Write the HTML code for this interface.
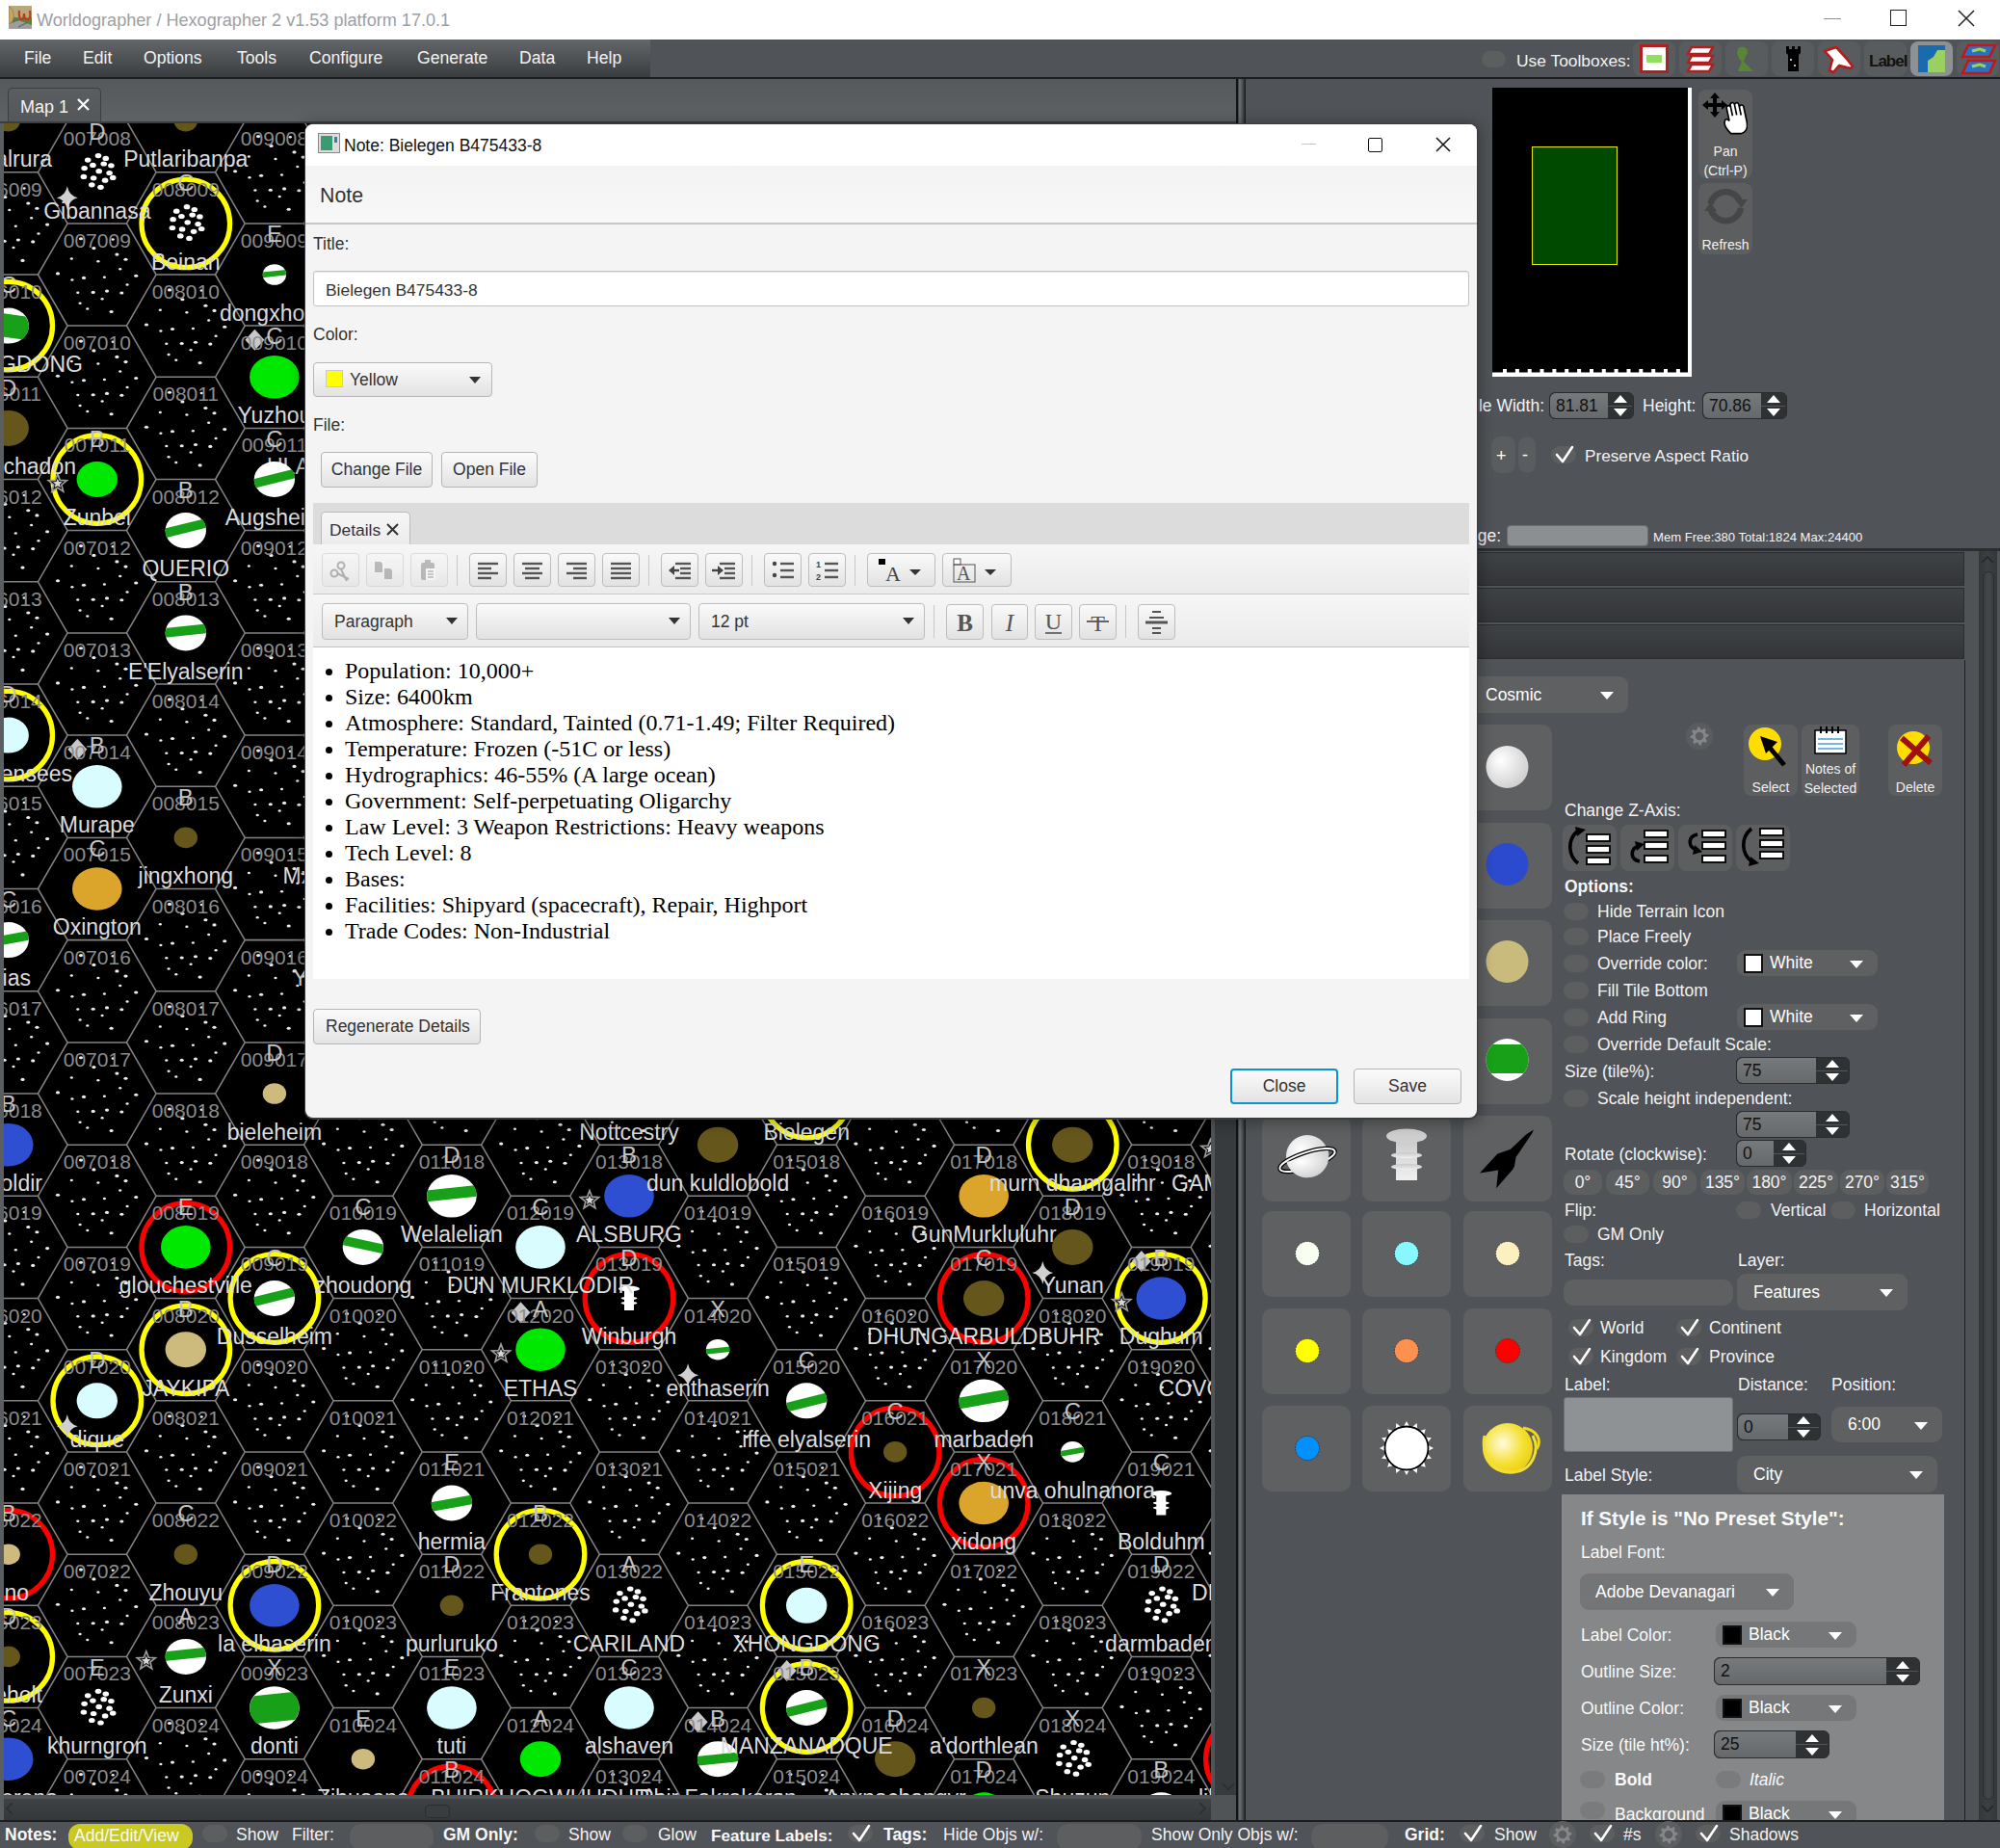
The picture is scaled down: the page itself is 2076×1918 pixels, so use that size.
<!DOCTYPE html>
<html><head><meta charset="utf-8">
<style>
*{box-sizing:border-box;margin:0;padding:0}
html,body{width:2076px;height:1918px;overflow:hidden;background:#505357;font-family:"Liberation Sans",sans-serif}
.a{position:absolute}
.t{position:absolute;white-space:nowrap;line-height:1}
</style></head><body>
<svg width="1257" height="1863" style="position:absolute;left:0;top:0">
<defs><clipPath id="mc"><rect x="4" y="128" width="1253" height="1735"/></clipPath>
<g id="st" fill="#ececec"><ellipse cx="-16.8" cy="-37.2" rx="2.1" ry="1.55"/><ellipse cx="-3.4" cy="-27.4" rx="2.1" ry="1.55"/><ellipse cx="20.6" cy="-20.9" rx="2.1" ry="1.55"/><ellipse cx="29.7" cy="-15.7" rx="2.1" ry="1.55"/><ellipse cx="-26.5" cy="-16.4" rx="1.6" ry="1.25"/><ellipse cx="1.1" cy="-13.8" rx="1.6" ry="1.25"/><ellipse cx="23.9" cy="-5.7" rx="1.6" ry="1.25"/><ellipse cx="-40.8" cy="-1.1" rx="2.1" ry="1.55"/><ellipse cx="40.4" cy="1.2" rx="2.1" ry="1.55"/><ellipse cx="-13.8" cy="3.4" rx="2.1" ry="1.55"/><ellipse cx="7.6" cy="2.8" rx="1.6" ry="1.25"/><ellipse cx="-25.9" cy="5.4" rx="1.6" ry="1.25"/><ellipse cx="31.3" cy="10.6" rx="1.6" ry="1.25"/><ellipse cx="-20" cy="18.7" rx="1.6" ry="1.25"/><ellipse cx="-4.1" cy="18.4" rx="2.1" ry="1.55"/><ellipse cx="10.2" cy="17.1" rx="2.1" ry="1.55"/><ellipse cx="25.5" cy="19" rx="2.1" ry="1.55"/><ellipse cx="5.3" cy="25.2" rx="1.6" ry="1.25"/><ellipse cx="-17.7" cy="29.8" rx="1.6" ry="1.25"/><ellipse cx="-10" cy="35.6" rx="1.6" ry="1.25"/><ellipse cx="14.8" cy="38.5" rx="2.1" ry="1.55"/><ellipse cx="16.4" cy="-36.5" rx="1.6" ry="1.25"/></g>
<g id="ast" fill="#fff"><ellipse cx="1.2" cy="-17.2" rx="3.3" ry="2.6"/><ellipse cx="9" cy="-14.4" rx="3.3" ry="2.6"/><ellipse cx="-9.6" cy="-12.7" rx="3.3" ry="2.6"/><ellipse cx="-4.4" cy="-7.4" rx="3.3" ry="2.6"/><ellipse cx="6.9" cy="-8.8" rx="3.3" ry="2.6"/><ellipse cx="14.6" cy="-7" rx="3.3" ry="2.6"/><ellipse cx="-13.2" cy="-4.2" rx="3.3" ry="2.6"/><ellipse cx="1.9" cy="-1.1" rx="3.3" ry="2.6"/><ellipse cx="12.8" cy="0.7" rx="3.3" ry="2.6"/><ellipse cx="-13.9" cy="4.6" rx="3.3" ry="2.6"/><ellipse cx="-3.7" cy="6" rx="3.3" ry="2.6"/><ellipse cx="16.4" cy="5.6" rx="3.3" ry="2.6"/><ellipse cx="8.3" cy="8.4" rx="3.3" ry="2.6"/><ellipse cx="-5.5" cy="13" rx="3.3" ry="2.6"/><ellipse cx="3.7" cy="15.5" rx="3.3" ry="2.6"/></g>
<g id="tw" fill="#fff"><ellipse cx="0" cy="-10" rx="11" ry="3"/><rect x="-5" y="-11" width="10" height="23.5"/><ellipse cx="0" cy="0" rx="8.5" ry="1.6"/><ellipse cx="0" cy="5" rx="8.5" ry="1.6"/></g>
<path id="f4" d="M0,-12 Q2,-2 11,0 Q2,2 0,12 Q-2,2 -11,0 Q-2,-2 0,-12Z" fill="#d0d0d0"/>
<g id="so"><polygon points="0,-10 2.5,-3.5 9.5,-3.1 4.1,1.3 5.9,8.1 0,4.3 -5.9,8.1 -4.1,1.3 -9.5,-3.1 -2.5,-3.5" fill="#000" stroke="#9c9c9c" stroke-width="1.7"/><polygon points="0,-5.2 1.4,-1.9 4.9,-1.6 2.2,0.7 3.1,4.2 0,2.3 -3.1,4.2 -2.2,0.7 -4.9,-1.6 -1.4,-1.9" fill="#d6d6d6"/></g>
<path id="dm" d="M0,-11 L10,0 L0,11 L-10,0Z" fill="#c8c8c8"/>
</defs>
<g clip-path="url(#mc)">
<rect x="0" y="0" width="1257" height="1863" fill="#000"/>
<g><use href="#st" x="8.7" y="231.9"/><use href="#st" x="8.7" y="550.6"/><use href="#st" x="8.7" y="656.9"/><use href="#st" x="8.7" y="869.4"/><use href="#st" x="8.7" y="1081.9"/><use href="#st" x="8.7" y="1294.4"/><use href="#st" x="8.7" y="1400.7"/><use href="#st" x="8.7" y="1506.9"/><use href="#st" x="8.7" y="1931.9"/><use href="#st" x="100.8" y="72.5"/><use href="#st" x="100.8" y="285"/><use href="#st" x="100.8" y="391.3"/><use href="#st" x="100.8" y="603.8"/><use href="#st" x="100.8" y="710"/><use href="#st" x="100.8" y="1028.8"/><use href="#st" x="100.8" y="1135"/><use href="#st" x="100.8" y="1241.3"/><use href="#st" x="100.8" y="1347.5"/><use href="#st" x="100.8" y="1560"/><use href="#st" x="100.8" y="1666.3"/><use href="#st" x="100.8" y="1878.8"/><use href="#st" x="192.8" y="338.1"/><use href="#st" x="192.8" y="444.4"/><use href="#st" x="192.8" y="763.1"/><use href="#st" x="192.8" y="975.6"/><use href="#st" x="192.8" y="1081.9"/><use href="#st" x="192.8" y="1188.2"/><use href="#st" x="192.8" y="1506.9"/><use href="#st" x="192.8" y="1825.7"/><use href="#st" x="192.8" y="1931.9"/><use href="#st" x="284.9" y="72.5"/><use href="#st" x="284.9" y="178.8"/><use href="#st" x="284.9" y="603.8"/><use href="#st" x="284.9" y="710"/><use href="#st" x="284.9" y="816.3"/><use href="#st" x="284.9" y="922.5"/><use href="#st" x="284.9" y="1028.8"/><use href="#st" x="284.9" y="1241.3"/><use href="#st" x="284.9" y="1453.8"/><use href="#st" x="284.9" y="1560"/><use href="#st" x="284.9" y="1878.8"/><use href="#st" x="376.9" y="125.7"/><use href="#st" x="376.9" y="231.9"/><use href="#st" x="376.9" y="338.1"/><use href="#st" x="376.9" y="444.4"/><use href="#st" x="376.9" y="550.6"/><use href="#st" x="376.9" y="656.9"/><use href="#st" x="376.9" y="763.1"/><use href="#st" x="376.9" y="869.4"/><use href="#st" x="376.9" y="975.6"/><use href="#st" x="376.9" y="1081.9"/><use href="#st" x="376.9" y="1188.2"/><use href="#st" x="376.9" y="1400.7"/><use href="#st" x="376.9" y="1506.9"/><use href="#st" x="376.9" y="1613.2"/><use href="#st" x="376.9" y="1719.4"/><use href="#st" x="376.9" y="1931.9"/><use href="#st" x="468.9" y="72.5"/><use href="#st" x="468.9" y="178.8"/><use href="#st" x="468.9" y="285"/><use href="#st" x="468.9" y="391.3"/><use href="#st" x="468.9" y="497.5"/><use href="#st" x="468.9" y="603.8"/><use href="#st" x="468.9" y="710"/><use href="#st" x="468.9" y="816.3"/><use href="#st" x="468.9" y="922.5"/><use href="#st" x="468.9" y="1028.8"/><use href="#st" x="468.9" y="1135"/><use href="#st" x="468.9" y="1347.5"/><use href="#st" x="468.9" y="1453.8"/><use href="#st" x="561" y="125.7"/><use href="#st" x="561" y="231.9"/><use href="#st" x="561" y="338.1"/><use href="#st" x="561" y="444.4"/><use href="#st" x="561" y="550.6"/><use href="#st" x="561" y="656.9"/><use href="#st" x="561" y="763.1"/><use href="#st" x="561" y="869.4"/><use href="#st" x="561" y="975.6"/><use href="#st" x="561" y="1081.9"/><use href="#st" x="561" y="1188.2"/><use href="#st" x="561" y="1506.9"/><use href="#st" x="561" y="1719.4"/><use href="#st" x="561" y="1931.9"/><use href="#st" x="653" y="72.5"/><use href="#st" x="653" y="178.8"/><use href="#st" x="653" y="285"/><use href="#st" x="653" y="391.3"/><use href="#st" x="653" y="497.5"/><use href="#st" x="653" y="603.8"/><use href="#st" x="653" y="710"/><use href="#st" x="653" y="816.3"/><use href="#st" x="653" y="922.5"/><use href="#st" x="653" y="1028.8"/><use href="#st" x="653" y="1135"/><use href="#st" x="653" y="1453.8"/><use href="#st" x="653" y="1560"/><use href="#st" x="653" y="1878.8"/><use href="#st" x="745.1" y="125.7"/><use href="#st" x="745.1" y="231.9"/><use href="#st" x="745.1" y="338.1"/><use href="#st" x="745.1" y="444.4"/><use href="#st" x="745.1" y="550.6"/><use href="#st" x="745.1" y="656.9"/><use href="#st" x="745.1" y="763.1"/><use href="#st" x="745.1" y="869.4"/><use href="#st" x="745.1" y="975.6"/><use href="#st" x="745.1" y="1081.9"/><use href="#st" x="745.1" y="1294.4"/><use href="#st" x="745.1" y="1506.9"/><use href="#st" x="745.1" y="1613.2"/><use href="#st" x="745.1" y="1719.4"/><use href="#st" x="745.1" y="1931.9"/><use href="#st" x="837.2" y="72.5"/><use href="#st" x="837.2" y="178.8"/><use href="#st" x="837.2" y="285"/><use href="#st" x="837.2" y="391.3"/><use href="#st" x="837.2" y="497.5"/><use href="#st" x="837.2" y="603.8"/><use href="#st" x="837.2" y="710"/><use href="#st" x="837.2" y="816.3"/><use href="#st" x="837.2" y="922.5"/><use href="#st" x="837.2" y="1028.8"/><use href="#st" x="837.2" y="1241.3"/><use href="#st" x="837.2" y="1347.5"/><use href="#st" x="837.2" y="1560"/><use href="#st" x="837.2" y="1878.8"/><use href="#st" x="929.2" y="125.7"/><use href="#st" x="929.2" y="231.9"/><use href="#st" x="929.2" y="338.1"/><use href="#st" x="929.2" y="444.4"/><use href="#st" x="929.2" y="550.6"/><use href="#st" x="929.2" y="656.9"/><use href="#st" x="929.2" y="763.1"/><use href="#st" x="929.2" y="869.4"/><use href="#st" x="929.2" y="975.6"/><use href="#st" x="929.2" y="1081.9"/><use href="#st" x="929.2" y="1188.2"/><use href="#st" x="929.2" y="1294.4"/><use href="#st" x="929.2" y="1400.7"/><use href="#st" x="929.2" y="1613.2"/><use href="#st" x="929.2" y="1719.4"/><use href="#st" x="929.2" y="1931.9"/><use href="#st" x="1021.2" y="72.5"/><use href="#st" x="1021.2" y="178.8"/><use href="#st" x="1021.2" y="285"/><use href="#st" x="1021.2" y="391.3"/><use href="#st" x="1021.2" y="497.5"/><use href="#st" x="1021.2" y="603.8"/><use href="#st" x="1021.2" y="710"/><use href="#st" x="1021.2" y="816.3"/><use href="#st" x="1021.2" y="922.5"/><use href="#st" x="1021.2" y="1028.8"/><use href="#st" x="1021.2" y="1135"/><use href="#st" x="1021.2" y="1666.3"/><use href="#st" x="1113.3" y="125.7"/><use href="#st" x="1113.3" y="231.9"/><use href="#st" x="1113.3" y="338.1"/><use href="#st" x="1113.3" y="444.4"/><use href="#st" x="1113.3" y="550.6"/><use href="#st" x="1113.3" y="656.9"/><use href="#st" x="1113.3" y="763.1"/><use href="#st" x="1113.3" y="869.4"/><use href="#st" x="1113.3" y="975.6"/><use href="#st" x="1113.3" y="1081.9"/><use href="#st" x="1113.3" y="1400.7"/><use href="#st" x="1113.3" y="1613.2"/><use href="#st" x="1113.3" y="1719.4"/><use href="#st" x="1113.3" y="1931.9"/><use href="#st" x="1205.3" y="72.5"/><use href="#st" x="1205.3" y="178.8"/><use href="#st" x="1205.3" y="285"/><use href="#st" x="1205.3" y="391.3"/><use href="#st" x="1205.3" y="497.5"/><use href="#st" x="1205.3" y="603.8"/><use href="#st" x="1205.3" y="710"/><use href="#st" x="1205.3" y="816.3"/><use href="#st" x="1205.3" y="922.5"/><use href="#st" x="1205.3" y="1028.8"/><use href="#st" x="1205.3" y="1135"/><use href="#st" x="1205.3" y="1241.3"/><use href="#st" x="1205.3" y="1453.8"/><use href="#st" x="1205.3" y="1772.5"/><use href="#st" x="1297.4" y="125.7"/><use href="#st" x="1297.4" y="231.9"/><use href="#st" x="1297.4" y="338.1"/><use href="#st" x="1297.4" y="444.4"/><use href="#st" x="1297.4" y="550.6"/><use href="#st" x="1297.4" y="656.9"/><use href="#st" x="1297.4" y="763.1"/><use href="#st" x="1297.4" y="869.4"/><use href="#st" x="1297.4" y="975.6"/><use href="#st" x="1297.4" y="1081.9"/><use href="#st" x="1297.4" y="1188.2"/><use href="#st" x="1297.4" y="1294.4"/><use href="#st" x="1297.4" y="1400.7"/><use href="#st" x="1297.4" y="1506.9"/><use href="#st" x="1297.4" y="1613.2"/><use href="#st" x="1297.4" y="1719.4"/><use href="#st" x="1297.4" y="1931.9"/></g>
<path d="M-52.6,125.7L-22,72.5L39.4,72.5L70.1,125.7L39.4,178.8L-22,178.8ZM-52.6,231.9L-22,178.8L39.4,178.8L70.1,231.9L39.4,285L-22,285ZM-52.6,338.1L-22,285L39.4,285L70.1,338.1L39.4,391.3L-22,391.3ZM-52.6,444.4L-22,391.3L39.4,391.3L70.1,444.4L39.4,497.5L-22,497.5ZM-52.6,550.6L-22,497.5L39.4,497.5L70.1,550.6L39.4,603.8L-22,603.8ZM-52.6,656.9L-22,603.8L39.4,603.8L70.1,656.9L39.4,710L-22,710ZM-52.6,763.1L-22,710L39.4,710L70.1,763.1L39.4,816.3L-22,816.3ZM-52.6,869.4L-22,816.3L39.4,816.3L70.1,869.4L39.4,922.5L-22,922.5ZM-52.6,975.6L-22,922.5L39.4,922.5L70.1,975.6L39.4,1028.8L-22,1028.8ZM-52.6,1081.9L-22,1028.8L39.4,1028.8L70.1,1081.9L39.4,1135L-22,1135ZM-52.6,1188.2L-22,1135L39.4,1135L70.1,1188.2L39.4,1241.3L-22,1241.3ZM-52.6,1294.4L-22,1241.3L39.4,1241.3L70.1,1294.4L39.4,1347.5L-22,1347.5ZM-52.6,1400.7L-22,1347.5L39.4,1347.5L70.1,1400.7L39.4,1453.8L-22,1453.8ZM-52.6,1506.9L-22,1453.8L39.4,1453.8L70.1,1506.9L39.4,1560L-22,1560ZM-52.6,1613.2L-22,1560L39.4,1560L70.1,1613.2L39.4,1666.3L-22,1666.3ZM-52.6,1719.4L-22,1666.3L39.4,1666.3L70.1,1719.4L39.4,1772.5L-22,1772.5ZM-52.6,1825.7L-22,1772.5L39.4,1772.5L70.1,1825.7L39.4,1878.8L-22,1878.8ZM-52.6,1931.9L-22,1878.8L39.4,1878.8L70.1,1931.9L39.4,1985L-22,1985ZM39.4,72.5L70.1,19.4L131.4,19.4L162.1,72.5L131.4,125.7L70.1,125.7ZM39.4,178.8L70.1,125.7L131.4,125.7L162.1,178.8L131.4,231.9L70.1,231.9ZM39.4,285L70.1,231.9L131.4,231.9L162.1,285L131.4,338.1L70.1,338.1ZM39.4,391.3L70.1,338.1L131.4,338.1L162.1,391.3L131.4,444.4L70.1,444.4ZM39.4,497.5L70.1,444.4L131.4,444.4L162.1,497.5L131.4,550.6L70.1,550.6ZM39.4,603.8L70.1,550.6L131.4,550.6L162.1,603.8L131.4,656.9L70.1,656.9ZM39.4,710L70.1,656.9L131.4,656.9L162.1,710L131.4,763.1L70.1,763.1ZM39.4,816.3L70.1,763.1L131.4,763.1L162.1,816.3L131.4,869.4L70.1,869.4ZM39.4,922.5L70.1,869.4L131.4,869.4L162.1,922.5L131.4,975.6L70.1,975.6ZM39.4,1028.8L70.1,975.7L131.4,975.7L162.1,1028.8L131.4,1081.9L70.1,1081.9ZM39.4,1135L70.1,1081.9L131.4,1081.9L162.1,1135L131.4,1188.2L70.1,1188.2ZM39.4,1241.3L70.1,1188.2L131.4,1188.2L162.1,1241.3L131.4,1294.4L70.1,1294.4ZM39.4,1347.5L70.1,1294.4L131.4,1294.4L162.1,1347.5L131.4,1400.7L70.1,1400.7ZM39.4,1453.8L70.1,1400.7L131.4,1400.7L162.1,1453.8L131.4,1506.9L70.1,1506.9ZM39.4,1560L70.1,1506.9L131.4,1506.9L162.1,1560L131.4,1613.2L70.1,1613.2ZM39.4,1666.3L70.1,1613.2L131.4,1613.2L162.1,1666.3L131.4,1719.4L70.1,1719.4ZM39.4,1772.5L70.1,1719.4L131.4,1719.4L162.1,1772.5L131.4,1825.7L70.1,1825.7ZM39.4,1878.8L70.1,1825.7L131.4,1825.7L162.1,1878.8L131.4,1931.9L70.1,1931.9ZM131.5,125.7L162.1,72.5L223.5,72.5L254.2,125.7L223.5,178.8L162.1,178.8ZM131.5,231.9L162.1,178.8L223.5,178.8L254.2,231.9L223.5,285L162.1,285ZM131.5,338.1L162.1,285L223.5,285L254.2,338.1L223.5,391.3L162.1,391.3ZM131.5,444.4L162.1,391.3L223.5,391.3L254.2,444.4L223.5,497.5L162.1,497.5ZM131.5,550.6L162.1,497.5L223.5,497.5L254.2,550.6L223.5,603.8L162.1,603.8ZM131.5,656.9L162.1,603.8L223.5,603.8L254.2,656.9L223.5,710L162.1,710ZM131.5,763.1L162.1,710L223.5,710L254.2,763.1L223.5,816.3L162.1,816.3ZM131.5,869.4L162.1,816.3L223.5,816.3L254.2,869.4L223.5,922.5L162.1,922.5ZM131.5,975.6L162.1,922.5L223.5,922.5L254.2,975.6L223.5,1028.8L162.1,1028.8ZM131.5,1081.9L162.1,1028.8L223.5,1028.8L254.2,1081.9L223.5,1135L162.1,1135ZM131.5,1188.2L162.1,1135L223.5,1135L254.2,1188.2L223.5,1241.3L162.1,1241.3ZM131.5,1294.4L162.1,1241.3L223.5,1241.3L254.2,1294.4L223.5,1347.5L162.1,1347.5ZM131.5,1400.7L162.1,1347.5L223.5,1347.5L254.2,1400.7L223.5,1453.8L162.1,1453.8ZM131.5,1506.9L162.1,1453.8L223.5,1453.8L254.2,1506.9L223.5,1560L162.1,1560ZM131.5,1613.2L162.1,1560L223.5,1560L254.2,1613.2L223.5,1666.3L162.1,1666.3ZM131.5,1719.4L162.1,1666.3L223.5,1666.3L254.2,1719.4L223.5,1772.5L162.1,1772.5ZM131.5,1825.7L162.1,1772.5L223.5,1772.5L254.2,1825.7L223.5,1878.8L162.1,1878.8ZM131.5,1931.9L162.1,1878.8L223.5,1878.8L254.2,1931.9L223.5,1985L162.1,1985ZM223.5,72.5L254.2,19.4L315.5,19.4L346.2,72.5L315.5,125.7L254.2,125.7ZM223.5,178.8L254.2,125.7L315.5,125.7L346.2,178.8L315.5,231.9L254.2,231.9ZM223.5,285L254.2,231.9L315.5,231.9L346.2,285L315.5,338.1L254.2,338.1ZM223.5,391.3L254.2,338.1L315.5,338.1L346.2,391.3L315.5,444.4L254.2,444.4ZM223.5,497.5L254.2,444.4L315.5,444.4L346.2,497.5L315.5,550.6L254.2,550.6ZM223.5,603.8L254.2,550.6L315.5,550.6L346.2,603.8L315.5,656.9L254.2,656.9ZM223.5,710L254.2,656.9L315.5,656.9L346.2,710L315.5,763.1L254.2,763.1ZM223.5,816.3L254.2,763.1L315.5,763.1L346.2,816.3L315.5,869.4L254.2,869.4ZM223.5,922.5L254.2,869.4L315.5,869.4L346.2,922.5L315.5,975.6L254.2,975.6ZM223.5,1028.8L254.2,975.7L315.5,975.7L346.2,1028.8L315.5,1081.9L254.2,1081.9ZM223.5,1135L254.2,1081.9L315.5,1081.9L346.2,1135L315.5,1188.2L254.2,1188.2ZM223.5,1241.3L254.2,1188.2L315.5,1188.2L346.2,1241.3L315.5,1294.4L254.2,1294.4ZM223.5,1347.5L254.2,1294.4L315.5,1294.4L346.2,1347.5L315.5,1400.7L254.2,1400.7ZM223.5,1453.8L254.2,1400.7L315.5,1400.7L346.2,1453.8L315.5,1506.9L254.2,1506.9ZM223.5,1560L254.2,1506.9L315.5,1506.9L346.2,1560L315.5,1613.2L254.2,1613.2ZM223.5,1666.3L254.2,1613.2L315.5,1613.2L346.2,1666.3L315.5,1719.4L254.2,1719.4ZM223.5,1772.5L254.2,1719.4L315.5,1719.4L346.2,1772.5L315.5,1825.7L254.2,1825.7ZM223.5,1878.8L254.2,1825.7L315.5,1825.7L346.2,1878.8L315.5,1931.9L254.2,1931.9ZM315.5,125.7L346.2,72.5L407.6,72.5L438.2,125.7L407.6,178.8L346.2,178.8ZM315.5,231.9L346.2,178.8L407.6,178.8L438.2,231.9L407.6,285L346.2,285ZM315.5,338.1L346.2,285L407.6,285L438.2,338.1L407.6,391.3L346.2,391.3ZM315.5,444.4L346.2,391.3L407.6,391.3L438.2,444.4L407.6,497.5L346.2,497.5ZM315.5,550.6L346.2,497.5L407.6,497.5L438.2,550.6L407.6,603.8L346.2,603.8ZM315.5,656.9L346.2,603.8L407.6,603.8L438.2,656.9L407.6,710L346.2,710ZM315.5,763.1L346.2,710L407.6,710L438.2,763.1L407.6,816.3L346.2,816.3ZM315.5,869.4L346.2,816.3L407.6,816.3L438.2,869.4L407.6,922.5L346.2,922.5ZM315.5,975.6L346.2,922.5L407.6,922.5L438.2,975.6L407.6,1028.8L346.2,1028.8ZM315.5,1081.9L346.2,1028.8L407.6,1028.8L438.2,1081.9L407.6,1135L346.2,1135ZM315.5,1188.2L346.2,1135L407.6,1135L438.2,1188.2L407.6,1241.3L346.2,1241.3ZM315.5,1294.4L346.2,1241.3L407.6,1241.3L438.2,1294.4L407.6,1347.5L346.2,1347.5ZM315.5,1400.7L346.2,1347.5L407.6,1347.5L438.2,1400.7L407.6,1453.8L346.2,1453.8ZM315.5,1506.9L346.2,1453.8L407.6,1453.8L438.2,1506.9L407.6,1560L346.2,1560ZM315.5,1613.2L346.2,1560L407.6,1560L438.2,1613.2L407.6,1666.3L346.2,1666.3ZM315.5,1719.4L346.2,1666.3L407.6,1666.3L438.2,1719.4L407.6,1772.5L346.2,1772.5ZM315.5,1825.7L346.2,1772.5L407.6,1772.5L438.2,1825.7L407.6,1878.8L346.2,1878.8ZM315.5,1931.9L346.2,1878.8L407.6,1878.8L438.2,1931.9L407.6,1985L346.2,1985ZM407.6,72.5L438.3,19.4L499.6,19.4L530.3,72.5L499.6,125.7L438.3,125.7ZM407.6,178.8L438.3,125.7L499.6,125.7L530.3,178.8L499.6,231.9L438.3,231.9ZM407.6,285L438.3,231.9L499.6,231.9L530.3,285L499.6,338.1L438.3,338.1ZM407.6,391.3L438.3,338.1L499.6,338.1L530.3,391.3L499.6,444.4L438.3,444.4ZM407.6,497.5L438.3,444.4L499.6,444.4L530.3,497.5L499.6,550.6L438.3,550.6ZM407.6,603.8L438.3,550.6L499.6,550.6L530.3,603.8L499.6,656.9L438.3,656.9ZM407.6,710L438.3,656.9L499.6,656.9L530.3,710L499.6,763.1L438.3,763.1ZM407.6,816.3L438.3,763.1L499.6,763.1L530.3,816.3L499.6,869.4L438.3,869.4ZM407.6,922.5L438.3,869.4L499.6,869.4L530.3,922.5L499.6,975.6L438.3,975.6ZM407.6,1028.8L438.3,975.7L499.6,975.7L530.3,1028.8L499.6,1081.9L438.3,1081.9ZM407.6,1135L438.3,1081.9L499.6,1081.9L530.3,1135L499.6,1188.2L438.3,1188.2ZM407.6,1241.3L438.3,1188.2L499.6,1188.2L530.3,1241.3L499.6,1294.4L438.3,1294.4ZM407.6,1347.5L438.3,1294.4L499.6,1294.4L530.3,1347.5L499.6,1400.7L438.3,1400.7ZM407.6,1453.8L438.3,1400.7L499.6,1400.7L530.3,1453.8L499.6,1506.9L438.3,1506.9ZM407.6,1560L438.3,1506.9L499.6,1506.9L530.3,1560L499.6,1613.2L438.3,1613.2ZM407.6,1666.3L438.3,1613.2L499.6,1613.2L530.3,1666.3L499.6,1719.4L438.3,1719.4ZM407.6,1772.5L438.3,1719.4L499.6,1719.4L530.3,1772.5L499.6,1825.7L438.3,1825.7ZM407.6,1878.8L438.3,1825.7L499.6,1825.7L530.3,1878.8L499.6,1931.9L438.3,1931.9ZM499.6,125.7L530.3,72.5L591.7,72.5L622.4,125.7L591.7,178.8L530.3,178.8ZM499.6,231.9L530.3,178.8L591.7,178.8L622.4,231.9L591.7,285L530.3,285ZM499.6,338.1L530.3,285L591.7,285L622.4,338.1L591.7,391.3L530.3,391.3ZM499.6,444.4L530.3,391.3L591.7,391.3L622.4,444.4L591.7,497.5L530.3,497.5ZM499.6,550.6L530.3,497.5L591.7,497.5L622.4,550.6L591.7,603.8L530.3,603.8ZM499.6,656.9L530.3,603.8L591.7,603.8L622.4,656.9L591.7,710L530.3,710ZM499.6,763.1L530.3,710L591.7,710L622.4,763.1L591.7,816.3L530.3,816.3ZM499.6,869.4L530.3,816.3L591.7,816.3L622.4,869.4L591.7,922.5L530.3,922.5ZM499.6,975.6L530.3,922.5L591.7,922.5L622.4,975.6L591.7,1028.8L530.3,1028.8ZM499.6,1081.9L530.3,1028.8L591.7,1028.8L622.4,1081.9L591.7,1135L530.3,1135ZM499.6,1188.2L530.3,1135L591.7,1135L622.4,1188.2L591.7,1241.3L530.3,1241.3ZM499.6,1294.4L530.3,1241.3L591.7,1241.3L622.4,1294.4L591.7,1347.5L530.3,1347.5ZM499.6,1400.7L530.3,1347.5L591.7,1347.5L622.4,1400.7L591.7,1453.8L530.3,1453.8ZM499.6,1506.9L530.3,1453.8L591.7,1453.8L622.4,1506.9L591.7,1560L530.3,1560ZM499.6,1613.2L530.3,1560L591.7,1560L622.4,1613.2L591.7,1666.3L530.3,1666.3ZM499.6,1719.4L530.3,1666.3L591.7,1666.3L622.4,1719.4L591.7,1772.5L530.3,1772.5ZM499.6,1825.7L530.3,1772.5L591.7,1772.5L622.4,1825.7L591.7,1878.8L530.3,1878.8ZM499.6,1931.9L530.3,1878.8L591.7,1878.8L622.4,1931.9L591.7,1985L530.3,1985ZM591.7,72.5L622.4,19.4L683.7,19.4L714.4,72.5L683.7,125.7L622.4,125.7ZM591.7,178.8L622.4,125.7L683.7,125.7L714.4,178.8L683.7,231.9L622.4,231.9ZM591.7,285L622.4,231.9L683.7,231.9L714.4,285L683.7,338.1L622.4,338.1ZM591.7,391.3L622.4,338.1L683.7,338.1L714.4,391.3L683.7,444.4L622.4,444.4ZM591.7,497.5L622.4,444.4L683.7,444.4L714.4,497.5L683.7,550.6L622.4,550.6ZM591.7,603.8L622.4,550.6L683.7,550.6L714.4,603.8L683.7,656.9L622.4,656.9ZM591.7,710L622.4,656.9L683.7,656.9L714.4,710L683.7,763.1L622.4,763.1ZM591.7,816.3L622.4,763.1L683.7,763.1L714.4,816.3L683.7,869.4L622.4,869.4ZM591.7,922.5L622.4,869.4L683.7,869.4L714.4,922.5L683.7,975.6L622.4,975.6ZM591.7,1028.8L622.4,975.7L683.7,975.7L714.4,1028.8L683.7,1081.9L622.4,1081.9ZM591.7,1135L622.4,1081.9L683.7,1081.9L714.4,1135L683.7,1188.2L622.4,1188.2ZM591.7,1241.3L622.4,1188.2L683.7,1188.2L714.4,1241.3L683.7,1294.4L622.4,1294.4ZM591.7,1347.5L622.4,1294.4L683.7,1294.4L714.4,1347.5L683.7,1400.7L622.4,1400.7ZM591.7,1453.8L622.4,1400.7L683.7,1400.7L714.4,1453.8L683.7,1506.9L622.4,1506.9ZM591.7,1560L622.4,1506.9L683.7,1506.9L714.4,1560L683.7,1613.2L622.4,1613.2ZM591.7,1666.3L622.4,1613.2L683.7,1613.2L714.4,1666.3L683.7,1719.4L622.4,1719.4ZM591.7,1772.5L622.4,1719.4L683.7,1719.4L714.4,1772.5L683.7,1825.7L622.4,1825.7ZM591.7,1878.8L622.4,1825.7L683.7,1825.7L714.4,1878.8L683.7,1931.9L622.4,1931.9ZM683.7,125.7L714.4,72.5L775.8,72.5L806.4,125.7L775.8,178.8L714.4,178.8ZM683.7,231.9L714.4,178.8L775.8,178.8L806.4,231.9L775.8,285L714.4,285ZM683.7,338.1L714.4,285L775.8,285L806.4,338.1L775.8,391.3L714.4,391.3ZM683.7,444.4L714.4,391.3L775.8,391.3L806.4,444.4L775.8,497.5L714.4,497.5ZM683.7,550.6L714.4,497.5L775.8,497.5L806.4,550.6L775.8,603.8L714.4,603.8ZM683.7,656.9L714.4,603.8L775.8,603.8L806.4,656.9L775.8,710L714.4,710ZM683.7,763.1L714.4,710L775.8,710L806.4,763.1L775.8,816.3L714.4,816.3ZM683.7,869.4L714.4,816.3L775.8,816.3L806.4,869.4L775.8,922.5L714.4,922.5ZM683.7,975.6L714.4,922.5L775.8,922.5L806.4,975.6L775.8,1028.8L714.4,1028.8ZM683.7,1081.9L714.4,1028.8L775.8,1028.8L806.4,1081.9L775.8,1135L714.4,1135ZM683.7,1188.2L714.4,1135L775.8,1135L806.4,1188.2L775.8,1241.3L714.4,1241.3ZM683.7,1294.4L714.4,1241.3L775.8,1241.3L806.4,1294.4L775.8,1347.5L714.4,1347.5ZM683.7,1400.7L714.4,1347.5L775.8,1347.5L806.4,1400.7L775.8,1453.8L714.4,1453.8ZM683.7,1506.9L714.4,1453.8L775.8,1453.8L806.4,1506.9L775.8,1560L714.4,1560ZM683.7,1613.2L714.4,1560L775.8,1560L806.4,1613.2L775.8,1666.3L714.4,1666.3ZM683.7,1719.4L714.4,1666.3L775.8,1666.3L806.4,1719.4L775.8,1772.5L714.4,1772.5ZM683.7,1825.7L714.4,1772.5L775.8,1772.5L806.4,1825.7L775.8,1878.8L714.4,1878.8ZM683.7,1931.9L714.4,1878.8L775.8,1878.8L806.4,1931.9L775.8,1985L714.4,1985ZM775.8,72.5L806.5,19.4L867.8,19.4L898.5,72.5L867.8,125.7L806.5,125.7ZM775.8,178.8L806.5,125.7L867.8,125.7L898.5,178.8L867.8,231.9L806.5,231.9ZM775.8,285L806.5,231.9L867.8,231.9L898.5,285L867.8,338.1L806.5,338.1ZM775.8,391.3L806.5,338.1L867.8,338.1L898.5,391.3L867.8,444.4L806.5,444.4ZM775.8,497.5L806.5,444.4L867.8,444.4L898.5,497.5L867.8,550.6L806.5,550.6ZM775.8,603.8L806.5,550.6L867.8,550.6L898.5,603.8L867.8,656.9L806.5,656.9ZM775.8,710L806.5,656.9L867.8,656.9L898.5,710L867.8,763.1L806.5,763.1ZM775.8,816.3L806.5,763.1L867.8,763.1L898.5,816.3L867.8,869.4L806.5,869.4ZM775.8,922.5L806.5,869.4L867.8,869.4L898.5,922.5L867.8,975.6L806.5,975.6ZM775.8,1028.8L806.5,975.7L867.8,975.7L898.5,1028.8L867.8,1081.9L806.5,1081.9ZM775.8,1135L806.5,1081.9L867.8,1081.9L898.5,1135L867.8,1188.2L806.5,1188.2ZM775.8,1241.3L806.5,1188.2L867.8,1188.2L898.5,1241.3L867.8,1294.4L806.5,1294.4ZM775.8,1347.5L806.5,1294.4L867.8,1294.4L898.5,1347.5L867.8,1400.7L806.5,1400.7ZM775.8,1453.8L806.5,1400.7L867.8,1400.7L898.5,1453.8L867.8,1506.9L806.5,1506.9ZM775.8,1560L806.5,1506.9L867.8,1506.9L898.5,1560L867.8,1613.2L806.5,1613.2ZM775.8,1666.3L806.5,1613.2L867.8,1613.2L898.5,1666.3L867.8,1719.4L806.5,1719.4ZM775.8,1772.5L806.5,1719.4L867.8,1719.4L898.5,1772.5L867.8,1825.7L806.5,1825.7ZM775.8,1878.8L806.5,1825.7L867.8,1825.7L898.5,1878.8L867.8,1931.9L806.5,1931.9ZM867.9,125.7L898.5,72.5L959.9,72.5L990.6,125.7L959.9,178.8L898.5,178.8ZM867.9,231.9L898.5,178.8L959.9,178.8L990.6,231.9L959.9,285L898.5,285ZM867.9,338.1L898.5,285L959.9,285L990.6,338.1L959.9,391.3L898.5,391.3ZM867.9,444.4L898.5,391.3L959.9,391.3L990.6,444.4L959.9,497.5L898.5,497.5ZM867.9,550.6L898.5,497.5L959.9,497.5L990.6,550.6L959.9,603.8L898.5,603.8ZM867.9,656.9L898.5,603.8L959.9,603.8L990.6,656.9L959.9,710L898.5,710ZM867.9,763.1L898.5,710L959.9,710L990.6,763.1L959.9,816.3L898.5,816.3ZM867.9,869.4L898.5,816.3L959.9,816.3L990.6,869.4L959.9,922.5L898.5,922.5ZM867.9,975.6L898.5,922.5L959.9,922.5L990.6,975.6L959.9,1028.8L898.5,1028.8ZM867.9,1081.9L898.5,1028.8L959.9,1028.8L990.6,1081.9L959.9,1135L898.5,1135ZM867.9,1188.2L898.5,1135L959.9,1135L990.6,1188.2L959.9,1241.3L898.5,1241.3ZM867.9,1294.4L898.5,1241.3L959.9,1241.3L990.6,1294.4L959.9,1347.5L898.5,1347.5ZM867.9,1400.7L898.5,1347.5L959.9,1347.5L990.6,1400.7L959.9,1453.8L898.5,1453.8ZM867.9,1506.9L898.5,1453.8L959.9,1453.8L990.6,1506.9L959.9,1560L898.5,1560ZM867.9,1613.2L898.5,1560L959.9,1560L990.6,1613.2L959.9,1666.3L898.5,1666.3ZM867.9,1719.4L898.5,1666.3L959.9,1666.3L990.6,1719.4L959.9,1772.5L898.5,1772.5ZM867.9,1825.7L898.5,1772.5L959.9,1772.5L990.6,1825.7L959.9,1878.8L898.5,1878.8ZM867.9,1931.9L898.5,1878.8L959.9,1878.8L990.6,1931.9L959.9,1985L898.5,1985ZM959.9,72.5L990.6,19.4L1051.9,19.4L1082.6,72.5L1051.9,125.7L990.6,125.7ZM959.9,178.8L990.6,125.7L1051.9,125.7L1082.6,178.8L1051.9,231.9L990.6,231.9ZM959.9,285L990.6,231.9L1051.9,231.9L1082.6,285L1051.9,338.1L990.6,338.1ZM959.9,391.3L990.6,338.1L1051.9,338.1L1082.6,391.3L1051.9,444.4L990.6,444.4ZM959.9,497.5L990.6,444.4L1051.9,444.4L1082.6,497.5L1051.9,550.6L990.6,550.6ZM959.9,603.8L990.6,550.6L1051.9,550.6L1082.6,603.8L1051.9,656.9L990.6,656.9ZM959.9,710L990.6,656.9L1051.9,656.9L1082.6,710L1051.9,763.1L990.6,763.1ZM959.9,816.3L990.6,763.1L1051.9,763.1L1082.6,816.3L1051.9,869.4L990.6,869.4ZM959.9,922.5L990.6,869.4L1051.9,869.4L1082.6,922.5L1051.9,975.6L990.6,975.6ZM959.9,1028.8L990.6,975.7L1051.9,975.7L1082.6,1028.8L1051.9,1081.9L990.6,1081.9ZM959.9,1135L990.6,1081.9L1051.9,1081.9L1082.6,1135L1051.9,1188.2L990.6,1188.2ZM959.9,1241.3L990.6,1188.2L1051.9,1188.2L1082.6,1241.3L1051.9,1294.4L990.6,1294.4ZM959.9,1347.5L990.6,1294.4L1051.9,1294.4L1082.6,1347.5L1051.9,1400.7L990.6,1400.7ZM959.9,1453.8L990.6,1400.7L1051.9,1400.7L1082.6,1453.8L1051.9,1506.9L990.6,1506.9ZM959.9,1560L990.6,1506.9L1051.9,1506.9L1082.6,1560L1051.9,1613.2L990.6,1613.2ZM959.9,1666.3L990.6,1613.2L1051.9,1613.2L1082.6,1666.3L1051.9,1719.4L990.6,1719.4ZM959.9,1772.5L990.6,1719.4L1051.9,1719.4L1082.6,1772.5L1051.9,1825.7L990.6,1825.7ZM959.9,1878.8L990.6,1825.7L1051.9,1825.7L1082.6,1878.8L1051.9,1931.9L990.6,1931.9ZM1052,125.7L1082.6,72.5L1144,72.5L1174.6,125.7L1144,178.8L1082.6,178.8ZM1052,231.9L1082.6,178.8L1144,178.8L1174.6,231.9L1144,285L1082.6,285ZM1052,338.1L1082.6,285L1144,285L1174.6,338.1L1144,391.3L1082.6,391.3ZM1052,444.4L1082.6,391.3L1144,391.3L1174.6,444.4L1144,497.5L1082.6,497.5ZM1052,550.6L1082.6,497.5L1144,497.5L1174.6,550.6L1144,603.8L1082.6,603.8ZM1052,656.9L1082.6,603.8L1144,603.8L1174.6,656.9L1144,710L1082.6,710ZM1052,763.1L1082.6,710L1144,710L1174.6,763.1L1144,816.3L1082.6,816.3ZM1052,869.4L1082.6,816.3L1144,816.3L1174.6,869.4L1144,922.5L1082.6,922.5ZM1052,975.6L1082.6,922.5L1144,922.5L1174.6,975.6L1144,1028.8L1082.6,1028.8ZM1052,1081.9L1082.6,1028.8L1144,1028.8L1174.6,1081.9L1144,1135L1082.6,1135ZM1052,1188.2L1082.6,1135L1144,1135L1174.6,1188.2L1144,1241.3L1082.6,1241.3ZM1052,1294.4L1082.6,1241.3L1144,1241.3L1174.6,1294.4L1144,1347.5L1082.6,1347.5ZM1052,1400.7L1082.6,1347.5L1144,1347.5L1174.6,1400.7L1144,1453.8L1082.6,1453.8ZM1052,1506.9L1082.6,1453.8L1144,1453.8L1174.6,1506.9L1144,1560L1082.6,1560ZM1052,1613.2L1082.6,1560L1144,1560L1174.6,1613.2L1144,1666.3L1082.6,1666.3ZM1052,1719.4L1082.6,1666.3L1144,1666.3L1174.6,1719.4L1144,1772.5L1082.6,1772.5ZM1052,1825.7L1082.6,1772.5L1144,1772.5L1174.6,1825.7L1144,1878.8L1082.6,1878.8ZM1052,1931.9L1082.6,1878.8L1144,1878.8L1174.6,1931.9L1144,1985L1082.6,1985ZM1144,72.5L1174.7,19.4L1236,19.4L1266.7,72.5L1236,125.7L1174.7,125.7ZM1144,178.8L1174.7,125.7L1236,125.7L1266.7,178.8L1236,231.9L1174.7,231.9ZM1144,285L1174.7,231.9L1236,231.9L1266.7,285L1236,338.1L1174.7,338.1ZM1144,391.3L1174.7,338.1L1236,338.1L1266.7,391.3L1236,444.4L1174.7,444.4ZM1144,497.5L1174.7,444.4L1236,444.4L1266.7,497.5L1236,550.6L1174.7,550.6ZM1144,603.8L1174.7,550.6L1236,550.6L1266.7,603.8L1236,656.9L1174.7,656.9ZM1144,710L1174.7,656.9L1236,656.9L1266.7,710L1236,763.1L1174.7,763.1ZM1144,816.3L1174.7,763.1L1236,763.1L1266.7,816.3L1236,869.4L1174.7,869.4ZM1144,922.5L1174.7,869.4L1236,869.4L1266.7,922.5L1236,975.6L1174.7,975.6ZM1144,1028.8L1174.7,975.7L1236,975.7L1266.7,1028.8L1236,1081.9L1174.7,1081.9ZM1144,1135L1174.7,1081.9L1236,1081.9L1266.7,1135L1236,1188.2L1174.7,1188.2ZM1144,1241.3L1174.7,1188.2L1236,1188.2L1266.7,1241.3L1236,1294.4L1174.7,1294.4ZM1144,1347.5L1174.7,1294.4L1236,1294.4L1266.7,1347.5L1236,1400.7L1174.7,1400.7ZM1144,1453.8L1174.7,1400.7L1236,1400.7L1266.7,1453.8L1236,1506.9L1174.7,1506.9ZM1144,1560L1174.7,1506.9L1236,1506.9L1266.7,1560L1236,1613.2L1174.7,1613.2ZM1144,1666.3L1174.7,1613.2L1236,1613.2L1266.7,1666.3L1236,1719.4L1174.7,1719.4ZM1144,1772.5L1174.7,1719.4L1236,1719.4L1266.7,1772.5L1236,1825.7L1174.7,1825.7ZM1144,1878.8L1174.7,1825.7L1236,1825.7L1266.7,1878.8L1236,1931.9L1174.7,1931.9ZM1236,125.7L1266.7,72.5L1328.1,72.5L1358.7,125.7L1328.1,178.8L1266.7,178.8ZM1236,231.9L1266.7,178.8L1328.1,178.8L1358.7,231.9L1328.1,285L1266.7,285ZM1236,338.1L1266.7,285L1328.1,285L1358.7,338.1L1328.1,391.3L1266.7,391.3ZM1236,444.4L1266.7,391.3L1328.1,391.3L1358.7,444.4L1328.1,497.5L1266.7,497.5ZM1236,550.6L1266.7,497.5L1328.1,497.5L1358.7,550.6L1328.1,603.8L1266.7,603.8ZM1236,656.9L1266.7,603.8L1328.1,603.8L1358.7,656.9L1328.1,710L1266.7,710ZM1236,763.1L1266.7,710L1328.1,710L1358.7,763.1L1328.1,816.3L1266.7,816.3ZM1236,869.4L1266.7,816.3L1328.1,816.3L1358.7,869.4L1328.1,922.5L1266.7,922.5ZM1236,975.6L1266.7,922.5L1328.1,922.5L1358.7,975.6L1328.1,1028.8L1266.7,1028.8ZM1236,1081.9L1266.7,1028.8L1328.1,1028.8L1358.7,1081.9L1328.1,1135L1266.7,1135ZM1236,1188.2L1266.7,1135L1328.1,1135L1358.7,1188.2L1328.1,1241.3L1266.7,1241.3ZM1236,1294.4L1266.7,1241.3L1328.1,1241.3L1358.7,1294.4L1328.1,1347.5L1266.7,1347.5ZM1236,1400.7L1266.7,1347.5L1328.1,1347.5L1358.7,1400.7L1328.1,1453.8L1266.7,1453.8ZM1236,1506.9L1266.7,1453.8L1328.1,1453.8L1358.7,1506.9L1328.1,1560L1266.7,1560ZM1236,1613.2L1266.7,1560L1328.1,1560L1358.7,1613.2L1328.1,1666.3L1266.7,1666.3ZM1236,1719.4L1266.7,1666.3L1328.1,1666.3L1358.7,1719.4L1328.1,1772.5L1266.7,1772.5ZM1236,1825.7L1266.7,1772.5L1328.1,1772.5L1358.7,1825.7L1328.1,1878.8L1266.7,1878.8ZM1236,1931.9L1266.7,1878.8L1328.1,1878.8L1358.7,1931.9L1328.1,1985L1266.7,1985Z" fill="none" stroke="#828282" stroke-width="1.5"/>
<g font-family="Liberation Sans, sans-serif"><text x="277" y="492.2" font-size="23" fill="#c8c8c8">ULARKHOGHUR</text></g>
<ellipse cx="8.7" cy="125.7" rx="12.2" ry="10.8" fill="#65571c"/><clipPath id="p6_10"><ellipse cx="8.7" cy="338.1" rx="21.2" ry="18.5"/></clipPath><ellipse cx="8.7" cy="338.1" rx="21.2" ry="18.5" fill="#fff"/><rect clip-path="url(#p6_10)" x="-18.5" y="326.1" width="54.4" height="24.1" fill="#18a018" transform="rotate(8 8.7 338.1)"/><circle cx="8.7" cy="338.1" r="45.8" fill="none" stroke="#ffff00" stroke-width="5.3"/><ellipse cx="8.7" cy="444.4" rx="21.2" ry="18.5" fill="#65571c"/><ellipse cx="8.7" cy="763.1" rx="21.2" ry="18.5" fill="#d9fcff"/><circle cx="8.7" cy="763.1" r="45.8" fill="none" stroke="#ffff00" stroke-width="5.3"/><clipPath id="p6_16"><ellipse cx="8.7" cy="975.6" rx="21.2" ry="18.5"/></clipPath><ellipse cx="8.7" cy="975.6" rx="21.2" ry="18.5" fill="#fff"/><rect clip-path="url(#p6_16)" x="-18.5" y="969.9" width="54.4" height="9.6" fill="#18a018" transform="rotate(-10 8.7 975.6)"/><ellipse cx="8.7" cy="1188.2" rx="25.8" ry="22.3" fill="#2e4fd1"/><ellipse cx="8.7" cy="1613.2" rx="12.2" ry="10.8" fill="#cdbb7d"/><circle cx="8.7" cy="1613.2" r="45.8" fill="none" stroke="#ff0000" stroke-width="5.3"/><ellipse cx="8.7" cy="1719.4" rx="12.2" ry="10.8" fill="#65571c"/><circle cx="8.7" cy="1719.4" r="45.8" fill="none" stroke="#ffff00" stroke-width="5.3"/><ellipse cx="8.7" cy="1825.7" rx="25.8" ry="22.3" fill="#2e4fd1"/><use href="#ast" x="100.8" y="178.8"/><use href="#f4" x="69.8" y="205.3"/><ellipse cx="100.8" cy="497.5" rx="21.2" ry="18.5" fill="#00e800"/><circle cx="100.8" cy="497.5" r="45.8" fill="none" stroke="#ffff00" stroke-width="5.3"/><use href="#so" x="59.8" y="501.9"/><ellipse cx="100.8" cy="816.3" rx="25.8" ry="22.3" fill="#d9fcff"/><use href="#dm" x="80.3" y="777.8"/><ellipse cx="100.8" cy="922.5" rx="25.8" ry="22.3" fill="#daa52a"/><ellipse cx="100.8" cy="1453.8" rx="21.2" ry="18.5" fill="#d9fcff"/><circle cx="100.8" cy="1453.8" r="45.8" fill="none" stroke="#ffff00" stroke-width="5.3"/><use href="#f4" x="69.8" y="1480.3"/><use href="#ast" x="100.8" y="1772.5"/><ellipse cx="192.8" cy="125.7" rx="12.2" ry="10.8" fill="#65571c"/><use href="#ast" x="192.8" y="231.9"/><circle cx="192.8" cy="231.9" r="45.8" fill="none" stroke="#ffff00" stroke-width="5.3"/><clipPath id="p8_12"><ellipse cx="192.8" cy="550.6" rx="21.2" ry="18.5"/></clipPath><ellipse cx="192.8" cy="550.6" rx="21.2" ry="18.5" fill="#fff"/><rect clip-path="url(#p8_12)" x="165.6" y="543.4" width="54.4" height="9.6" fill="#18a018" transform="rotate(-14 192.8 550.6)"/><clipPath id="p8_13"><ellipse cx="192.8" cy="656.9" rx="21.2" ry="18.5"/></clipPath><ellipse cx="192.8" cy="656.9" rx="21.2" ry="18.5" fill="#fff"/><rect clip-path="url(#p8_13)" x="165.6" y="649.8" width="54.4" height="9.6" fill="#18a018" transform="rotate(-6 192.8 656.9)"/><ellipse cx="192.8" cy="869.4" rx="12.2" ry="10.8" fill="#65571c"/><ellipse cx="192.8" cy="1294.4" rx="25.8" ry="22.3" fill="#00e800"/><circle cx="192.8" cy="1294.4" r="45.8" fill="none" stroke="#ff0000" stroke-width="5.3"/><ellipse cx="192.8" cy="1400.7" rx="21.2" ry="18.5" fill="#cdbb7d"/><circle cx="192.8" cy="1400.7" r="45.8" fill="none" stroke="#ffff00" stroke-width="5.3"/><ellipse cx="192.8" cy="1613.2" rx="12.2" ry="10.8" fill="#65571c"/><clipPath id="p8_23"><ellipse cx="192.8" cy="1719.4" rx="21.2" ry="18.5"/></clipPath><ellipse cx="192.8" cy="1719.4" rx="21.2" ry="18.5" fill="#fff"/><rect clip-path="url(#p8_23)" x="165.6" y="1712.1" width="54.4" height="9.6" fill="#18a018" transform="rotate(-6 192.8 1719.4)"/><use href="#so" x="151.8" y="1723.8"/><clipPath id="p9_9"><ellipse cx="284.9" cy="285" rx="12.2" ry="10.8"/></clipPath><ellipse cx="284.9" cy="285" rx="12.2" ry="10.8" fill="#fff"/><rect clip-path="url(#p9_9)" x="266.7" y="281.2" width="36.4" height="5.6" fill="#18a018" transform="rotate(-6 284.9 285)"/><ellipse cx="284.9" cy="391.3" rx="25.8" ry="22.3" fill="#00e800"/><use href="#dm" x="264.4" y="352.8"/><clipPath id="p9_11"><ellipse cx="284.9" cy="497.5" rx="21.2" ry="18.5"/></clipPath><ellipse cx="284.9" cy="497.5" rx="21.2" ry="18.5" fill="#fff"/><rect clip-path="url(#p9_11)" x="257.7" y="491.9" width="54.4" height="9.6" fill="#18a018" transform="rotate(-14 284.9 497.5)"/><ellipse cx="284.9" cy="1135" rx="12.2" ry="10.8" fill="#cdbb7d"/><clipPath id="p9_19"><ellipse cx="284.9" cy="1347.5" rx="21.2" ry="18.5"/></clipPath><ellipse cx="284.9" cy="1347.5" rx="21.2" ry="18.5" fill="#fff"/><rect clip-path="url(#p9_19)" x="257.7" y="1341.1" width="54.4" height="9.6" fill="#18a018" transform="rotate(-14 284.9 1347.5)"/><circle cx="284.9" cy="1347.5" r="45.8" fill="none" stroke="#ffff00" stroke-width="5.3"/><ellipse cx="284.9" cy="1666.3" rx="25.8" ry="22.3" fill="#2e4fd1"/><circle cx="284.9" cy="1666.3" r="45.8" fill="none" stroke="#ffff00" stroke-width="5.3"/><clipPath id="p9_23"><ellipse cx="284.9" cy="1772.5" rx="25.8" ry="22.3"/></clipPath><ellipse cx="284.9" cy="1772.5" rx="25.8" ry="22.3" fill="#fff"/><rect clip-path="url(#p9_23)" x="253.1" y="1758" width="63.6" height="29" fill="#18a018" transform="rotate(-6 284.9 1772.5)"/><clipPath id="p10_19"><ellipse cx="376.9" cy="1294.4" rx="21.2" ry="18.5"/></clipPath><ellipse cx="376.9" cy="1294.4" rx="21.2" ry="18.5" fill="#fff"/><rect clip-path="url(#p10_19)" x="349.7" y="1287.1" width="54.4" height="9.6" fill="#18a018" transform="rotate(12 376.9 1294.4)"/><ellipse cx="376.9" cy="1825.7" rx="12.2" ry="10.8" fill="#cdbb7d"/><clipPath id="p11_18"><ellipse cx="468.9" cy="1241.3" rx="25.8" ry="22.3"/></clipPath><ellipse cx="468.9" cy="1241.3" rx="25.8" ry="22.3" fill="#fff"/><rect clip-path="url(#p11_18)" x="437.1" y="1232.8" width="63.6" height="11.6" fill="#18a018" transform="rotate(-6 468.9 1241.3)"/><clipPath id="p11_21"><ellipse cx="468.9" cy="1560" rx="21.2" ry="18.5"/></clipPath><ellipse cx="468.9" cy="1560" rx="21.2" ry="18.5" fill="#fff"/><rect clip-path="url(#p11_21)" x="441.8" y="1555.4" width="54.4" height="9.6" fill="#18a018" transform="rotate(-10 468.9 1560)"/><ellipse cx="468.9" cy="1666.3" rx="12.2" ry="10.8" fill="#65571c"/><ellipse cx="468.9" cy="1772.5" rx="25.8" ry="22.3" fill="#d9fcff"/><circle cx="468.9" cy="1878.8" r="45.8" fill="none" stroke="#ff0000" stroke-width="5.3"/><ellipse cx="561" cy="1294.4" rx="25.8" ry="22.3" fill="#d9fcff"/><ellipse cx="561" cy="1400.7" rx="25.8" ry="22.3" fill="#00e800"/><use href="#dm" x="540.5" y="1362.2"/><use href="#so" x="520" y="1405.1"/><ellipse cx="561" cy="1613.2" rx="12.2" ry="10.8" fill="#65571c"/><circle cx="561" cy="1613.2" r="45.8" fill="none" stroke="#ffff00" stroke-width="5.3"/><ellipse cx="561" cy="1825.7" rx="21.2" ry="18.5" fill="#00e800"/><ellipse cx="653" cy="1241.3" rx="25.8" ry="22.3" fill="#2e4fd1"/><use href="#so" x="612" y="1245.7"/><use href="#tw" x="653" y="1347.5"/><circle cx="653" cy="1347.5" r="45.8" fill="none" stroke="#ff0000" stroke-width="5.3"/><use href="#ast" x="653" y="1666.3"/><ellipse cx="653" cy="1772.5" rx="25.8" ry="22.3" fill="#d9fcff"/><ellipse cx="745.1" cy="1188.2" rx="21.2" ry="18.5" fill="#65571c"/><clipPath id="p14_20"><ellipse cx="745.1" cy="1400.7" rx="12.2" ry="10.8"/></clipPath><ellipse cx="745.1" cy="1400.7" rx="12.2" ry="10.8" fill="#fff"/><rect clip-path="url(#p14_20)" x="726.9" y="1398.8" width="36.4" height="5.6" fill="#18a018" transform="rotate(-6 745.1 1400.7)"/><use href="#f4" x="714.1" y="1427.2"/><clipPath id="p14_24"><ellipse cx="745.1" cy="1825.7" rx="21.2" ry="18.5"/></clipPath><ellipse cx="745.1" cy="1825.7" rx="21.2" ry="18.5" fill="#fff"/><rect clip-path="url(#p14_24)" x="717.9" y="1820.8" width="54.4" height="9.6" fill="#18a018" transform="rotate(-6 745.1 1825.7)"/><use href="#dm" x="724.6" y="1787.2"/><circle cx="837.2" cy="1135" r="45.8" fill="none" stroke="#ffff00" stroke-width="5.3"/><clipPath id="p15_20"><ellipse cx="837.2" cy="1453.8" rx="21.2" ry="18.5"/></clipPath><ellipse cx="837.2" cy="1453.8" rx="21.2" ry="18.5" fill="#fff"/><rect clip-path="url(#p15_20)" x="810" y="1450.7" width="54.4" height="9.6" fill="#18a018" transform="rotate(-14 837.2 1453.8)"/><ellipse cx="837.2" cy="1666.3" rx="21.2" ry="18.5" fill="#d9fcff"/><circle cx="837.2" cy="1666.3" r="45.8" fill="none" stroke="#ffff00" stroke-width="5.3"/><clipPath id="p15_23"><ellipse cx="837.2" cy="1772.5" rx="21.2" ry="18.5"/></clipPath><ellipse cx="837.2" cy="1772.5" rx="21.2" ry="18.5" fill="#fff"/><rect clip-path="url(#p15_23)" x="810" y="1767.5" width="54.4" height="9.6" fill="#18a018" transform="rotate(-14 837.2 1772.5)"/><circle cx="837.2" cy="1772.5" r="45.8" fill="none" stroke="#ffff00" stroke-width="5.3"/><use href="#dm" x="816.7" y="1734"/><ellipse cx="929.2" cy="1506.9" rx="12.2" ry="10.8" fill="#65571c"/><circle cx="929.2" cy="1506.9" r="45.8" fill="none" stroke="#ff0000" stroke-width="5.3"/><ellipse cx="929.2" cy="1825.7" rx="21.2" ry="18.5" fill="#65571c"/><ellipse cx="1021.2" cy="1241.3" rx="25.8" ry="22.3" fill="#daa52a"/><ellipse cx="1021.2" cy="1347.5" rx="21.2" ry="18.5" fill="#65571c"/><circle cx="1021.2" cy="1347.5" r="45.8" fill="none" stroke="#ff0000" stroke-width="5.3"/><clipPath id="p17_20"><ellipse cx="1021.2" cy="1453.8" rx="25.8" ry="22.3"/></clipPath><ellipse cx="1021.2" cy="1453.8" rx="25.8" ry="22.3" fill="#fff"/><rect clip-path="url(#p17_20)" x="989.5" y="1446.2" width="63.6" height="11.6" fill="#18a018" transform="rotate(-10 1021.2 1453.8)"/><ellipse cx="1021.2" cy="1560" rx="25.8" ry="22.3" fill="#daa52a"/><circle cx="1021.2" cy="1560" r="45.8" fill="none" stroke="#ff0000" stroke-width="5.3"/><ellipse cx="1021.2" cy="1772.5" rx="12.2" ry="10.8" fill="#65571c"/><ellipse cx="1021.2" cy="1878.8" rx="21.2" ry="18.5" fill="#00e800"/><ellipse cx="1113.3" cy="1188.2" rx="21.2" ry="18.5" fill="#65571c"/><circle cx="1113.3" cy="1188.2" r="45.8" fill="none" stroke="#ffff00" stroke-width="5.3"/><ellipse cx="1113.3" cy="1294.4" rx="21.2" ry="18.5" fill="#65571c"/><use href="#f4" x="1082.3" y="1320.9"/><clipPath id="p18_21"><ellipse cx="1113.3" cy="1506.9" rx="12.2" ry="10.8"/></clipPath><ellipse cx="1113.3" cy="1506.9" rx="12.2" ry="10.8" fill="#fff"/><rect clip-path="url(#p18_21)" x="1095.1" y="1503.9" width="36.4" height="5.6" fill="#18a018" transform="rotate(-10 1113.3 1506.9)"/><use href="#ast" x="1113.3" y="1825.7"/><ellipse cx="1205.3" cy="1347.5" rx="25.8" ry="22.3" fill="#2e4fd1"/><circle cx="1205.3" cy="1347.5" r="45.8" fill="none" stroke="#ffff00" stroke-width="5.3"/><use href="#dm" x="1184.8" y="1309"/><use href="#so" x="1164.3" y="1351.9"/><use href="#tw" x="1205.3" y="1560"/><use href="#ast" x="1205.3" y="1666.3"/><clipPath id="p19_24"><ellipse cx="1205.3" cy="1878.8" rx="21.2" ry="18.5"/></clipPath><ellipse cx="1205.3" cy="1878.8" rx="21.2" ry="18.5" fill="#fff"/><rect clip-path="url(#p19_24)" x="1178.1" y="1872.6" width="54.4" height="9.6" fill="#18a018" transform="rotate(-6 1205.3 1878.8)"/><use href="#so" x="1256.4" y="1192.6"/><circle cx="1297.4" cy="1825.7" r="45.8" fill="none" stroke="#ff0000" stroke-width="5.3"/>
<g font-family="Liberation Sans, sans-serif" text-anchor="middle"><text x="8.7" y="97.6" font-size="21" fill="#8c8c8c">006008</text><text x="8.7" y="203.8" font-size="21" fill="#8c8c8c">006009</text><text x="8.7" y="310" font-size="21" fill="#8c8c8c">006010</text><text x="8.7" y="416.3" font-size="21" fill="#8c8c8c">006011</text><text x="8.7" y="522.5" font-size="21" fill="#8c8c8c">006012</text><text x="8.7" y="628.8" font-size="21" fill="#8c8c8c">006013</text><text x="8.7" y="735" font-size="21" fill="#8c8c8c">006014</text><text x="8.7" y="841.3" font-size="21" fill="#8c8c8c">006015</text><text x="8.7" y="947.5" font-size="21" fill="#8c8c8c">006016</text><text x="8.7" y="1053.8" font-size="21" fill="#8c8c8c">006017</text><text x="8.7" y="1160.1" font-size="21" fill="#8c8c8c">006018</text><text x="8.7" y="1266.3" font-size="21" fill="#8c8c8c">006019</text><text x="8.7" y="1372.6" font-size="21" fill="#8c8c8c">006020</text><text x="8.7" y="1478.8" font-size="21" fill="#8c8c8c">006021</text><text x="8.7" y="1585.1" font-size="21" fill="#8c8c8c">006022</text><text x="8.7" y="1691.3" font-size="21" fill="#8c8c8c">006023</text><text x="8.7" y="1797.6" font-size="21" fill="#8c8c8c">006024</text><text x="8.7" y="1903.8" font-size="21" fill="#8c8c8c">006025</text><text x="100.8" y="44.4" font-size="21" fill="#8c8c8c">007007</text><text x="100.8" y="150.7" font-size="21" fill="#8c8c8c">007008</text><text x="100.8" y="256.9" font-size="21" fill="#8c8c8c">007009</text><text x="100.8" y="363.2" font-size="21" fill="#8c8c8c">007010</text><text x="100.8" y="469.4" font-size="21" fill="#8c8c8c">007011</text><text x="100.8" y="575.7" font-size="21" fill="#8c8c8c">007012</text><text x="100.8" y="681.9" font-size="21" fill="#8c8c8c">007013</text><text x="100.8" y="788.2" font-size="21" fill="#8c8c8c">007014</text><text x="100.8" y="894.4" font-size="21" fill="#8c8c8c">007015</text><text x="100.8" y="1000.7" font-size="21" fill="#8c8c8c">007016</text><text x="100.8" y="1106.9" font-size="21" fill="#8c8c8c">007017</text><text x="100.8" y="1213.2" font-size="21" fill="#8c8c8c">007018</text><text x="100.8" y="1319.4" font-size="21" fill="#8c8c8c">007019</text><text x="100.8" y="1425.7" font-size="21" fill="#8c8c8c">007020</text><text x="100.8" y="1531.9" font-size="21" fill="#8c8c8c">007021</text><text x="100.8" y="1638.2" font-size="21" fill="#8c8c8c">007022</text><text x="100.8" y="1744.4" font-size="21" fill="#8c8c8c">007023</text><text x="100.8" y="1850.7" font-size="21" fill="#8c8c8c">007024</text><text x="192.8" y="97.6" font-size="21" fill="#8c8c8c">008008</text><text x="192.8" y="203.8" font-size="21" fill="#8c8c8c">008009</text><text x="192.8" y="310" font-size="21" fill="#8c8c8c">008010</text><text x="192.8" y="416.3" font-size="21" fill="#8c8c8c">008011</text><text x="192.8" y="522.5" font-size="21" fill="#8c8c8c">008012</text><text x="192.8" y="628.8" font-size="21" fill="#8c8c8c">008013</text><text x="192.8" y="735" font-size="21" fill="#8c8c8c">008014</text><text x="192.8" y="841.3" font-size="21" fill="#8c8c8c">008015</text><text x="192.8" y="947.5" font-size="21" fill="#8c8c8c">008016</text><text x="192.8" y="1053.8" font-size="21" fill="#8c8c8c">008017</text><text x="192.8" y="1160.1" font-size="21" fill="#8c8c8c">008018</text><text x="192.8" y="1266.3" font-size="21" fill="#8c8c8c">008019</text><text x="192.8" y="1372.6" font-size="21" fill="#8c8c8c">008020</text><text x="192.8" y="1478.8" font-size="21" fill="#8c8c8c">008021</text><text x="192.8" y="1585.1" font-size="21" fill="#8c8c8c">008022</text><text x="192.8" y="1691.3" font-size="21" fill="#8c8c8c">008023</text><text x="192.8" y="1797.6" font-size="21" fill="#8c8c8c">008024</text><text x="192.8" y="1903.8" font-size="21" fill="#8c8c8c">008025</text><text x="284.9" y="44.4" font-size="21" fill="#8c8c8c">009007</text><text x="284.9" y="150.7" font-size="21" fill="#8c8c8c">009008</text><text x="284.9" y="256.9" font-size="21" fill="#8c8c8c">009009</text><text x="284.9" y="363.2" font-size="21" fill="#8c8c8c">009010</text><text x="284.9" y="469.4" font-size="21" fill="#8c8c8c">009011</text><text x="284.9" y="575.7" font-size="21" fill="#8c8c8c">009012</text><text x="284.9" y="681.9" font-size="21" fill="#8c8c8c">009013</text><text x="284.9" y="788.2" font-size="21" fill="#8c8c8c">009014</text><text x="284.9" y="894.4" font-size="21" fill="#8c8c8c">009015</text><text x="284.9" y="1000.7" font-size="21" fill="#8c8c8c">009016</text><text x="284.9" y="1106.9" font-size="21" fill="#8c8c8c">009017</text><text x="284.9" y="1213.2" font-size="21" fill="#8c8c8c">009018</text><text x="284.9" y="1319.4" font-size="21" fill="#8c8c8c">009019</text><text x="284.9" y="1425.7" font-size="21" fill="#8c8c8c">009020</text><text x="284.9" y="1531.9" font-size="21" fill="#8c8c8c">009021</text><text x="284.9" y="1638.2" font-size="21" fill="#8c8c8c">009022</text><text x="284.9" y="1744.4" font-size="21" fill="#8c8c8c">009023</text><text x="284.9" y="1850.7" font-size="21" fill="#8c8c8c">009024</text><text x="376.9" y="97.6" font-size="21" fill="#8c8c8c">010008</text><text x="376.9" y="203.8" font-size="21" fill="#8c8c8c">010009</text><text x="376.9" y="310" font-size="21" fill="#8c8c8c">010010</text><text x="376.9" y="416.3" font-size="21" fill="#8c8c8c">010011</text><text x="376.9" y="522.5" font-size="21" fill="#8c8c8c">010012</text><text x="376.9" y="628.8" font-size="21" fill="#8c8c8c">010013</text><text x="376.9" y="735" font-size="21" fill="#8c8c8c">010014</text><text x="376.9" y="841.3" font-size="21" fill="#8c8c8c">010015</text><text x="376.9" y="947.5" font-size="21" fill="#8c8c8c">010016</text><text x="376.9" y="1053.8" font-size="21" fill="#8c8c8c">010017</text><text x="376.9" y="1160.1" font-size="21" fill="#8c8c8c">010018</text><text x="376.9" y="1266.3" font-size="21" fill="#8c8c8c">010019</text><text x="376.9" y="1372.6" font-size="21" fill="#8c8c8c">010020</text><text x="376.9" y="1478.8" font-size="21" fill="#8c8c8c">010021</text><text x="376.9" y="1585.1" font-size="21" fill="#8c8c8c">010022</text><text x="376.9" y="1691.3" font-size="21" fill="#8c8c8c">010023</text><text x="376.9" y="1797.6" font-size="21" fill="#8c8c8c">010024</text><text x="376.9" y="1903.8" font-size="21" fill="#8c8c8c">010025</text><text x="468.9" y="44.4" font-size="21" fill="#8c8c8c">011007</text><text x="468.9" y="150.7" font-size="21" fill="#8c8c8c">011008</text><text x="468.9" y="256.9" font-size="21" fill="#8c8c8c">011009</text><text x="468.9" y="363.2" font-size="21" fill="#8c8c8c">011010</text><text x="468.9" y="469.4" font-size="21" fill="#8c8c8c">011011</text><text x="468.9" y="575.7" font-size="21" fill="#8c8c8c">011012</text><text x="468.9" y="681.9" font-size="21" fill="#8c8c8c">011013</text><text x="468.9" y="788.2" font-size="21" fill="#8c8c8c">011014</text><text x="468.9" y="894.4" font-size="21" fill="#8c8c8c">011015</text><text x="468.9" y="1000.7" font-size="21" fill="#8c8c8c">011016</text><text x="468.9" y="1106.9" font-size="21" fill="#8c8c8c">011017</text><text x="468.9" y="1213.2" font-size="21" fill="#8c8c8c">011018</text><text x="468.9" y="1319.4" font-size="21" fill="#8c8c8c">011019</text><text x="468.9" y="1425.7" font-size="21" fill="#8c8c8c">011020</text><text x="468.9" y="1531.9" font-size="21" fill="#8c8c8c">011021</text><text x="468.9" y="1638.2" font-size="21" fill="#8c8c8c">011022</text><text x="468.9" y="1744.4" font-size="21" fill="#8c8c8c">011023</text><text x="468.9" y="1850.7" font-size="21" fill="#8c8c8c">011024</text><text x="561" y="97.6" font-size="21" fill="#8c8c8c">012008</text><text x="561" y="203.8" font-size="21" fill="#8c8c8c">012009</text><text x="561" y="310" font-size="21" fill="#8c8c8c">012010</text><text x="561" y="416.3" font-size="21" fill="#8c8c8c">012011</text><text x="561" y="522.5" font-size="21" fill="#8c8c8c">012012</text><text x="561" y="628.8" font-size="21" fill="#8c8c8c">012013</text><text x="561" y="735" font-size="21" fill="#8c8c8c">012014</text><text x="561" y="841.3" font-size="21" fill="#8c8c8c">012015</text><text x="561" y="947.5" font-size="21" fill="#8c8c8c">012016</text><text x="561" y="1053.8" font-size="21" fill="#8c8c8c">012017</text><text x="561" y="1160.1" font-size="21" fill="#8c8c8c">012018</text><text x="561" y="1266.3" font-size="21" fill="#8c8c8c">012019</text><text x="561" y="1372.6" font-size="21" fill="#8c8c8c">012020</text><text x="561" y="1478.8" font-size="21" fill="#8c8c8c">012021</text><text x="561" y="1585.1" font-size="21" fill="#8c8c8c">012022</text><text x="561" y="1691.3" font-size="21" fill="#8c8c8c">012023</text><text x="561" y="1797.6" font-size="21" fill="#8c8c8c">012024</text><text x="561" y="1903.8" font-size="21" fill="#8c8c8c">012025</text><text x="653" y="44.4" font-size="21" fill="#8c8c8c">013007</text><text x="653" y="150.7" font-size="21" fill="#8c8c8c">013008</text><text x="653" y="256.9" font-size="21" fill="#8c8c8c">013009</text><text x="653" y="363.2" font-size="21" fill="#8c8c8c">013010</text><text x="653" y="469.4" font-size="21" fill="#8c8c8c">013011</text><text x="653" y="575.7" font-size="21" fill="#8c8c8c">013012</text><text x="653" y="681.9" font-size="21" fill="#8c8c8c">013013</text><text x="653" y="788.2" font-size="21" fill="#8c8c8c">013014</text><text x="653" y="894.4" font-size="21" fill="#8c8c8c">013015</text><text x="653" y="1000.7" font-size="21" fill="#8c8c8c">013016</text><text x="653" y="1106.9" font-size="21" fill="#8c8c8c">013017</text><text x="653" y="1213.2" font-size="21" fill="#8c8c8c">013018</text><text x="653" y="1319.4" font-size="21" fill="#8c8c8c">013019</text><text x="653" y="1425.7" font-size="21" fill="#8c8c8c">013020</text><text x="653" y="1531.9" font-size="21" fill="#8c8c8c">013021</text><text x="653" y="1638.2" font-size="21" fill="#8c8c8c">013022</text><text x="653" y="1744.4" font-size="21" fill="#8c8c8c">013023</text><text x="653" y="1850.7" font-size="21" fill="#8c8c8c">013024</text><text x="745.1" y="97.6" font-size="21" fill="#8c8c8c">014008</text><text x="745.1" y="203.8" font-size="21" fill="#8c8c8c">014009</text><text x="745.1" y="310" font-size="21" fill="#8c8c8c">014010</text><text x="745.1" y="416.3" font-size="21" fill="#8c8c8c">014011</text><text x="745.1" y="522.5" font-size="21" fill="#8c8c8c">014012</text><text x="745.1" y="628.8" font-size="21" fill="#8c8c8c">014013</text><text x="745.1" y="735" font-size="21" fill="#8c8c8c">014014</text><text x="745.1" y="841.3" font-size="21" fill="#8c8c8c">014015</text><text x="745.1" y="947.5" font-size="21" fill="#8c8c8c">014016</text><text x="745.1" y="1053.8" font-size="21" fill="#8c8c8c">014017</text><text x="745.1" y="1160.1" font-size="21" fill="#8c8c8c">014018</text><text x="745.1" y="1266.3" font-size="21" fill="#8c8c8c">014019</text><text x="745.1" y="1372.6" font-size="21" fill="#8c8c8c">014020</text><text x="745.1" y="1478.8" font-size="21" fill="#8c8c8c">014021</text><text x="745.1" y="1585.1" font-size="21" fill="#8c8c8c">014022</text><text x="745.1" y="1691.3" font-size="21" fill="#8c8c8c">014023</text><text x="745.1" y="1797.6" font-size="21" fill="#8c8c8c">014024</text><text x="745.1" y="1903.8" font-size="21" fill="#8c8c8c">014025</text><text x="837.2" y="44.4" font-size="21" fill="#8c8c8c">015007</text><text x="837.2" y="150.7" font-size="21" fill="#8c8c8c">015008</text><text x="837.2" y="256.9" font-size="21" fill="#8c8c8c">015009</text><text x="837.2" y="363.2" font-size="21" fill="#8c8c8c">015010</text><text x="837.2" y="469.4" font-size="21" fill="#8c8c8c">015011</text><text x="837.2" y="575.7" font-size="21" fill="#8c8c8c">015012</text><text x="837.2" y="681.9" font-size="21" fill="#8c8c8c">015013</text><text x="837.2" y="788.2" font-size="21" fill="#8c8c8c">015014</text><text x="837.2" y="894.4" font-size="21" fill="#8c8c8c">015015</text><text x="837.2" y="1000.7" font-size="21" fill="#8c8c8c">015016</text><text x="837.2" y="1106.9" font-size="21" fill="#8c8c8c">015017</text><text x="837.2" y="1213.2" font-size="21" fill="#8c8c8c">015018</text><text x="837.2" y="1319.4" font-size="21" fill="#8c8c8c">015019</text><text x="837.2" y="1425.7" font-size="21" fill="#8c8c8c">015020</text><text x="837.2" y="1531.9" font-size="21" fill="#8c8c8c">015021</text><text x="837.2" y="1638.2" font-size="21" fill="#8c8c8c">015022</text><text x="837.2" y="1744.4" font-size="21" fill="#8c8c8c">015023</text><text x="837.2" y="1850.7" font-size="21" fill="#8c8c8c">015024</text><text x="929.2" y="97.6" font-size="21" fill="#8c8c8c">016008</text><text x="929.2" y="203.8" font-size="21" fill="#8c8c8c">016009</text><text x="929.2" y="310" font-size="21" fill="#8c8c8c">016010</text><text x="929.2" y="416.3" font-size="21" fill="#8c8c8c">016011</text><text x="929.2" y="522.5" font-size="21" fill="#8c8c8c">016012</text><text x="929.2" y="628.8" font-size="21" fill="#8c8c8c">016013</text><text x="929.2" y="735" font-size="21" fill="#8c8c8c">016014</text><text x="929.2" y="841.3" font-size="21" fill="#8c8c8c">016015</text><text x="929.2" y="947.5" font-size="21" fill="#8c8c8c">016016</text><text x="929.2" y="1053.8" font-size="21" fill="#8c8c8c">016017</text><text x="929.2" y="1160.1" font-size="21" fill="#8c8c8c">016018</text><text x="929.2" y="1266.3" font-size="21" fill="#8c8c8c">016019</text><text x="929.2" y="1372.6" font-size="21" fill="#8c8c8c">016020</text><text x="929.2" y="1478.8" font-size="21" fill="#8c8c8c">016021</text><text x="929.2" y="1585.1" font-size="21" fill="#8c8c8c">016022</text><text x="929.2" y="1691.3" font-size="21" fill="#8c8c8c">016023</text><text x="929.2" y="1797.6" font-size="21" fill="#8c8c8c">016024</text><text x="929.2" y="1903.8" font-size="21" fill="#8c8c8c">016025</text><text x="1021.2" y="44.4" font-size="21" fill="#8c8c8c">017007</text><text x="1021.2" y="150.7" font-size="21" fill="#8c8c8c">017008</text><text x="1021.2" y="256.9" font-size="21" fill="#8c8c8c">017009</text><text x="1021.2" y="363.2" font-size="21" fill="#8c8c8c">017010</text><text x="1021.2" y="469.4" font-size="21" fill="#8c8c8c">017011</text><text x="1021.2" y="575.7" font-size="21" fill="#8c8c8c">017012</text><text x="1021.2" y="681.9" font-size="21" fill="#8c8c8c">017013</text><text x="1021.2" y="788.2" font-size="21" fill="#8c8c8c">017014</text><text x="1021.2" y="894.4" font-size="21" fill="#8c8c8c">017015</text><text x="1021.2" y="1000.7" font-size="21" fill="#8c8c8c">017016</text><text x="1021.2" y="1106.9" font-size="21" fill="#8c8c8c">017017</text><text x="1021.2" y="1213.2" font-size="21" fill="#8c8c8c">017018</text><text x="1021.2" y="1319.4" font-size="21" fill="#8c8c8c">017019</text><text x="1021.2" y="1425.7" font-size="21" fill="#8c8c8c">017020</text><text x="1021.2" y="1531.9" font-size="21" fill="#8c8c8c">017021</text><text x="1021.2" y="1638.2" font-size="21" fill="#8c8c8c">017022</text><text x="1021.2" y="1744.4" font-size="21" fill="#8c8c8c">017023</text><text x="1021.2" y="1850.7" font-size="21" fill="#8c8c8c">017024</text><text x="1113.3" y="97.6" font-size="21" fill="#8c8c8c">018008</text><text x="1113.3" y="203.8" font-size="21" fill="#8c8c8c">018009</text><text x="1113.3" y="310" font-size="21" fill="#8c8c8c">018010</text><text x="1113.3" y="416.3" font-size="21" fill="#8c8c8c">018011</text><text x="1113.3" y="522.5" font-size="21" fill="#8c8c8c">018012</text><text x="1113.3" y="628.8" font-size="21" fill="#8c8c8c">018013</text><text x="1113.3" y="735" font-size="21" fill="#8c8c8c">018014</text><text x="1113.3" y="841.3" font-size="21" fill="#8c8c8c">018015</text><text x="1113.3" y="947.5" font-size="21" fill="#8c8c8c">018016</text><text x="1113.3" y="1053.8" font-size="21" fill="#8c8c8c">018017</text><text x="1113.3" y="1160.1" font-size="21" fill="#8c8c8c">018018</text><text x="1113.3" y="1266.3" font-size="21" fill="#8c8c8c">018019</text><text x="1113.3" y="1372.6" font-size="21" fill="#8c8c8c">018020</text><text x="1113.3" y="1478.8" font-size="21" fill="#8c8c8c">018021</text><text x="1113.3" y="1585.1" font-size="21" fill="#8c8c8c">018022</text><text x="1113.3" y="1691.3" font-size="21" fill="#8c8c8c">018023</text><text x="1113.3" y="1797.6" font-size="21" fill="#8c8c8c">018024</text><text x="1113.3" y="1903.8" font-size="21" fill="#8c8c8c">018025</text><text x="1205.3" y="44.4" font-size="21" fill="#8c8c8c">019007</text><text x="1205.3" y="150.7" font-size="21" fill="#8c8c8c">019008</text><text x="1205.3" y="256.9" font-size="21" fill="#8c8c8c">019009</text><text x="1205.3" y="363.2" font-size="21" fill="#8c8c8c">019010</text><text x="1205.3" y="469.4" font-size="21" fill="#8c8c8c">019011</text><text x="1205.3" y="575.7" font-size="21" fill="#8c8c8c">019012</text><text x="1205.3" y="681.9" font-size="21" fill="#8c8c8c">019013</text><text x="1205.3" y="788.2" font-size="21" fill="#8c8c8c">019014</text><text x="1205.3" y="894.4" font-size="21" fill="#8c8c8c">019015</text><text x="1205.3" y="1000.7" font-size="21" fill="#8c8c8c">019016</text><text x="1205.3" y="1106.9" font-size="21" fill="#8c8c8c">019017</text><text x="1205.3" y="1213.2" font-size="21" fill="#8c8c8c">019018</text><text x="1205.3" y="1319.4" font-size="21" fill="#8c8c8c">019019</text><text x="1205.3" y="1425.7" font-size="21" fill="#8c8c8c">019020</text><text x="1205.3" y="1531.9" font-size="21" fill="#8c8c8c">019021</text><text x="1205.3" y="1638.2" font-size="21" fill="#8c8c8c">019022</text><text x="1205.3" y="1744.4" font-size="21" fill="#8c8c8c">019023</text><text x="1205.3" y="1850.7" font-size="21" fill="#8c8c8c">019024</text><text x="1297.4" y="97.6" font-size="21" fill="#8c8c8c">020008</text><text x="1297.4" y="203.8" font-size="21" fill="#8c8c8c">020009</text><text x="1297.4" y="310" font-size="21" fill="#8c8c8c">020010</text><text x="1297.4" y="416.3" font-size="21" fill="#8c8c8c">020011</text><text x="1297.4" y="522.5" font-size="21" fill="#8c8c8c">020012</text><text x="1297.4" y="628.8" font-size="21" fill="#8c8c8c">020013</text><text x="1297.4" y="735" font-size="21" fill="#8c8c8c">020014</text><text x="1297.4" y="841.3" font-size="21" fill="#8c8c8c">020015</text><text x="1297.4" y="947.5" font-size="21" fill="#8c8c8c">020016</text><text x="1297.4" y="1053.8" font-size="21" fill="#8c8c8c">020017</text><text x="1297.4" y="1160.1" font-size="21" fill="#8c8c8c">020018</text><text x="1297.4" y="1266.3" font-size="21" fill="#8c8c8c">020019</text><text x="1297.4" y="1372.6" font-size="21" fill="#8c8c8c">020020</text><text x="1297.4" y="1478.8" font-size="21" fill="#8c8c8c">020021</text><text x="1297.4" y="1585.1" font-size="21" fill="#8c8c8c">020022</text><text x="1297.4" y="1691.3" font-size="21" fill="#8c8c8c">020023</text><text x="1297.4" y="1797.6" font-size="21" fill="#8c8c8c">020024</text><text x="1297.4" y="1903.8" font-size="21" fill="#8c8c8c">020025</text><text x="8.7" y="304.2" font-size="24" fill="#c4c4c4">C</text><text x="8.7" y="410.5" font-size="24" fill="#c4c4c4">D</text><text x="8.7" y="729.2" font-size="24" fill="#c4c4c4">D</text><text x="8.7" y="941.8" font-size="24" fill="#c4c4c4">C</text><text x="8.7" y="1154.2" font-size="24" fill="#c4c4c4">B</text><text x="8.7" y="1579.2" font-size="24" fill="#c4c4c4">B</text><text x="8.7" y="1685.5" font-size="24" fill="#c4c4c4">D</text><text x="8.7" y="1791.8" font-size="24" fill="#c4c4c4">C</text><text x="100.8" y="144.9" font-size="24" fill="#c4c4c4">D</text><text x="100.8" y="463.6" font-size="24" fill="#c4c4c4">B</text><text x="100.8" y="782.4" font-size="24" fill="#c4c4c4">B</text><text x="100.8" y="888.6" font-size="24" fill="#c4c4c4">C</text><text x="100.8" y="1419.9" font-size="24" fill="#c4c4c4">D</text><text x="100.8" y="1738.6" font-size="24" fill="#c4c4c4">E</text><text x="192.8" y="198" font-size="24" fill="#c4c4c4">C</text><text x="192.8" y="516.8" font-size="24" fill="#c4c4c4">B</text><text x="192.8" y="623" font-size="24" fill="#c4c4c4">B</text><text x="192.8" y="835.5" font-size="24" fill="#c4c4c4">B</text><text x="192.8" y="1260.5" font-size="24" fill="#c4c4c4">E</text><text x="192.8" y="1366.8" font-size="24" fill="#c4c4c4">B</text><text x="192.8" y="1579.2" font-size="24" fill="#c4c4c4">C</text><text x="192.8" y="1685.5" font-size="24" fill="#c4c4c4">A</text><text x="284.9" y="251.1" font-size="24" fill="#c4c4c4">E</text><text x="284.9" y="357.4" font-size="24" fill="#c4c4c4">C</text><text x="284.9" y="463.6" font-size="24" fill="#c4c4c4">C</text><text x="284.9" y="1101.1" font-size="24" fill="#c4c4c4">D</text><text x="284.9" y="1313.6" font-size="24" fill="#c4c4c4">C</text><text x="284.9" y="1632.4" font-size="24" fill="#c4c4c4">D</text><text x="284.9" y="1738.6" font-size="24" fill="#c4c4c4">X</text><text x="376.9" y="1260.5" font-size="24" fill="#c4c4c4">C</text><text x="376.9" y="1791.8" font-size="24" fill="#c4c4c4">E</text><text x="468.9" y="1207.4" font-size="24" fill="#c4c4c4">D</text><text x="468.9" y="1526.1" font-size="24" fill="#c4c4c4">E</text><text x="468.9" y="1632.4" font-size="24" fill="#c4c4c4">D</text><text x="468.9" y="1738.6" font-size="24" fill="#c4c4c4">E</text><text x="468.9" y="1844.9" font-size="24" fill="#c4c4c4">B</text><text x="561" y="1260.5" font-size="24" fill="#c4c4c4">C</text><text x="561" y="1366.8" font-size="24" fill="#c4c4c4">A</text><text x="561" y="1579.2" font-size="24" fill="#c4c4c4">B</text><text x="561" y="1791.8" font-size="24" fill="#c4c4c4">A</text><text x="653" y="1207.4" font-size="24" fill="#c4c4c4">B</text><text x="653" y="1313.6" font-size="24" fill="#c4c4c4">D</text><text x="653" y="1632.4" font-size="24" fill="#c4c4c4">A</text><text x="653" y="1738.6" font-size="24" fill="#c4c4c4">C</text><text x="745.1" y="1366.8" font-size="24" fill="#c4c4c4">X</text><text x="745.1" y="1791.8" font-size="24" fill="#c4c4c4">B</text><text x="837.2" y="1419.9" font-size="24" fill="#c4c4c4">C</text><text x="837.2" y="1632.4" font-size="24" fill="#c4c4c4">E</text><text x="837.2" y="1738.6" font-size="24" fill="#c4c4c4">B</text><text x="929.2" y="1473" font-size="24" fill="#c4c4c4">C</text><text x="929.2" y="1791.8" font-size="24" fill="#c4c4c4">D</text><text x="1021.2" y="1207.4" font-size="24" fill="#c4c4c4">D</text><text x="1021.2" y="1313.6" font-size="24" fill="#c4c4c4">C</text><text x="1021.2" y="1419.9" font-size="24" fill="#c4c4c4">X</text><text x="1021.2" y="1526.1" font-size="24" fill="#c4c4c4">X</text><text x="1021.2" y="1738.6" font-size="24" fill="#c4c4c4">X</text><text x="1021.2" y="1844.9" font-size="24" fill="#c4c4c4">D</text><text x="1113.3" y="1260.5" font-size="24" fill="#c4c4c4">D</text><text x="1113.3" y="1473" font-size="24" fill="#c4c4c4">C</text><text x="1113.3" y="1791.8" font-size="24" fill="#c4c4c4">X</text><text x="1205.3" y="1313.6" font-size="24" fill="#c4c4c4">B</text><text x="1205.3" y="1526.1" font-size="24" fill="#c4c4c4">C</text><text x="1205.3" y="1632.4" font-size="24" fill="#c4c4c4">D</text><text x="1205.3" y="1844.9" font-size="24" fill="#c4c4c4">B</text><text x="54" y="173.4" font-size="23" fill="#dcdcdc" text-anchor="end">Dalrura</text><text x="86" y="385.9" font-size="23" fill="#dcdcdc" text-anchor="end">JINGDONG</text><text x="79" y="492.2" font-size="23" fill="#dcdcdc" text-anchor="end">Vochadon</text><text x="75" y="810.9" font-size="23" fill="#dcdcdc" text-anchor="end">Tensees</text><text x="32" y="1023.4" font-size="23" fill="#dcdcdc" text-anchor="end">Kias</text><text x="44" y="1236" font-size="23" fill="#dcdcdc" text-anchor="end">Goldir</text><text x="30" y="1661" font-size="23" fill="#dcdcdc" text-anchor="end">Juno</text><text x="44" y="1767.2" font-size="23" fill="#dcdcdc" text-anchor="end">Reholt</text><text x="60" y="1873.5" font-size="23" fill="#dcdcdc" text-anchor="end">Istorona</text><text x="100.8" y="226.6" font-size="23" fill="#dcdcdc">Gibannasa</text><text x="100.8" y="545.3" font-size="23" fill="#dcdcdc">Zunbei</text><text x="100.8" y="864.1" font-size="23" fill="#dcdcdc">Murape</text><text x="100.8" y="970.3" font-size="23" fill="#dcdcdc">Oxington</text><text x="100.8" y="1501.6" font-size="23" fill="#dcdcdc">dique</text><text x="100.8" y="1820.3" font-size="23" fill="#dcdcdc">khurngron</text><text x="192.8" y="173.4" font-size="23" fill="#dcdcdc">Putlaribanpa</text><text x="192.8" y="279.7" font-size="23" fill="#dcdcdc">Beinan</text><text x="192.8" y="598.4" font-size="23" fill="#dcdcdc">QUERIO</text><text x="192.8" y="704.7" font-size="23" fill="#dcdcdc">E&#39;Elyalserin</text><text x="192.8" y="917.2" font-size="23" fill="#dcdcdc">jingxhong</text><text x="192.8" y="1342.2" font-size="23" fill="#dcdcdc">glouchestville</text><text x="192.8" y="1448.5" font-size="23" fill="#dcdcdc">JAYKIPA</text><text x="192.8" y="1661" font-size="23" fill="#dcdcdc">Zhouyu</text><text x="192.8" y="1767.2" font-size="23" fill="#dcdcdc">Zunxi</text><text x="284.9" y="332.8" font-size="23" fill="#dcdcdc">dongxhong</text><text x="284.9" y="439.1" font-size="23" fill="#dcdcdc">Yuzhou</text><text x="284.9" y="545.3" font-size="23" fill="#dcdcdc">Augsheim</text><text x="284.9" y="1182.8" font-size="23" fill="#dcdcdc">bieleheim</text><text x="284.9" y="1395.3" font-size="23" fill="#dcdcdc">Dusselheim</text><text x="284.9" y="1714.1" font-size="23" fill="#dcdcdc">la elhaserin</text><text x="284.9" y="1820.3" font-size="23" fill="#dcdcdc">donti</text><text x="284.9" y="1926.6" font-size="23" fill="#dcdcdc">Zhuoana</text><text x="293.5" y="917.2" font-size="23" fill="#dcdcdc" text-anchor="start">Mxhazelbergen</text><text x="304" y="1023.4" font-size="23" fill="#dcdcdc" text-anchor="start">Yxonchangdu</text><text x="376.9" y="1342.2" font-size="23" fill="#dcdcdc">zhoudong</text><text x="376.9" y="1873.5" font-size="23" fill="#dcdcdc">Zihuaana</text><text x="468.9" y="1289.1" font-size="23" fill="#dcdcdc">Welalelian</text><text x="468.9" y="1607.8" font-size="23" fill="#dcdcdc">hermia</text><text x="468.9" y="1714.1" font-size="23" fill="#dcdcdc">purluruko</text><text x="468.9" y="1820.3" font-size="23" fill="#dcdcdc">tuti</text><text x="561" y="1342.2" font-size="23" fill="#dcdcdc">DUN MURKLODIR</text><text x="561" y="1448.5" font-size="23" fill="#dcdcdc">ETHAS</text><text x="561" y="1661" font-size="23" fill="#dcdcdc">Frantones</text><text x="561" y="1873.5" font-size="23" fill="#dcdcdc">BUIRKHOGWHUDHR</text><text x="653" y="1182.8" font-size="23" fill="#dcdcdc">Nottcestry</text><text x="653" y="1289.1" font-size="23" fill="#dcdcdc">ALSBURG</text><text x="653" y="1395.3" font-size="23" fill="#dcdcdc">Winburgh</text><text x="653" y="1714.1" font-size="23" fill="#dcdcdc">CARILAND</text><text x="653" y="1820.3" font-size="23" fill="#dcdcdc">alshaven</text><text x="745.1" y="1236" font-size="23" fill="#dcdcdc">dun kuldlobold</text><text x="745.1" y="1448.5" font-size="23" fill="#dcdcdc">enthaserin</text><text x="745.1" y="1873.5" font-size="23" fill="#dcdcdc">Phir Fakrakaran</text><text x="837.2" y="1182.8" font-size="23" fill="#dcdcdc">Bielegen</text><text x="837.2" y="1501.6" font-size="23" fill="#dcdcdc">iffe elyalserin</text><text x="837.2" y="1714.1" font-size="23" fill="#dcdcdc">XHONGDONG</text><text x="837.2" y="1820.3" font-size="23" fill="#dcdcdc">MANZANADQUE</text><text x="929.2" y="1554.7" font-size="23" fill="#dcdcdc">Xijing</text><text x="929.2" y="1873.5" font-size="23" fill="#dcdcdc">Anxnachangyr</text><text x="1021.2" y="1289.1" font-size="23" fill="#dcdcdc">GunMurkluluhr</text><text x="1021.2" y="1395.3" font-size="23" fill="#dcdcdc">DHUNGARBULDBUHR</text><text x="1021.2" y="1501.6" font-size="23" fill="#dcdcdc">marbaden</text><text x="1021.2" y="1607.8" font-size="23" fill="#dcdcdc">xidong</text><text x="1021.2" y="1820.3" font-size="23" fill="#dcdcdc">a&#39;dorthlean</text><text x="1113.3" y="1236" font-size="23" fill="#dcdcdc">murn dhamgalihr</text><text x="1113.3" y="1342.2" font-size="23" fill="#dcdcdc">Yunan</text><text x="1113.3" y="1554.7" font-size="23" fill="#dcdcdc">unva ohulnanora</text><text x="1113.3" y="1873.5" font-size="23" fill="#dcdcdc">Shuzun</text><text x="1205.3" y="1395.3" font-size="23" fill="#dcdcdc">Dughum</text><text x="1205.3" y="1607.8" font-size="23" fill="#dcdcdc">Bolduhm</text><text x="1205.3" y="1714.1" font-size="23" fill="#dcdcdc">darmbaden</text><text x="1216" y="1236" font-size="23" fill="#dcdcdc" text-anchor="start">GAMLUGHDUHR</text><text x="1202.6" y="1448.5" font-size="23" fill="#dcdcdc" text-anchor="start">COVODLIGRAD</text><text x="1237" y="1661" font-size="23" fill="#dcdcdc" text-anchor="start">DIRHAMBUR</text><text x="1244" y="1873.5" font-size="23" fill="#dcdcdc" text-anchor="start">lihara</text></g>
</g></svg><div class="a" style="left:0px;top:0px;width:2076px;height:41px;background:#fff"></div>
<svg class="a" style="left:9px;top:6px;" width="24" height="24" viewBox="0 0 24 24"><rect width="24" height="24" fill="#b9a77c"/><path d="M0,10C6,12 14,14 24,12V24H0Z" fill="#5f7f3e"/><path d="M0,19L10,15L24,20V24H0Z" fill="#9c9e9c"/><path d="M4,17L12,14M10,22L20,17" stroke="#666" stroke-width="1.2"/><path d="M0,1C7,3 7,17 0,19Z" fill="#c9a45e" stroke="#9a7a40" stroke-width="0.8"/><path d="M11,5C10,12 12,15 14.5,14C15.5,13 16,11 16,8C16,11 17,14 19.5,14C22,14 23,11 22,5" fill="none" stroke="#b8401c" stroke-width="2.2"/></svg>
<div class="t" style="left:38.0px;top:11.7px;font-size:18.1px;color:#9aa0a6;font-weight:normal;">Worldographer / Hexographer 2 v1.53 platform 17.0.1</div>
<div class="a" style="left:1893px;top:19px;width:18px;height:1.3px;background:#909090"></div>
<div class="a" style="left:1962px;top:10px;width:17px;height:17px;border:1.5px solid #222"></div>
<svg class="a" style="left:2032px;top:10px;" width="18" height="18" viewBox="0 0 18 18"><path d="M1,1L17,17M17,1L1,17" stroke="#222" stroke-width="1.5"/></svg>
<div class="a" style="left:0px;top:41px;width:2076px;height:40px;background:#505357"></div>
<div class="a" style="left:0px;top:41px;width:675px;height:39px;background:linear-gradient(#646769,#3a3d40)"></div>
<div class="a" style="left:0px;top:80px;width:2076px;height:2px;background:#1b1d1e"></div>
<div class="t" style="left:25.0px;top:52.1px;font-size:17.6px;color:#f2f2f2;font-weight:normal;">File</div>
<div class="t" style="left:86.0px;top:52.1px;font-size:17.6px;color:#f2f2f2;font-weight:normal;">Edit</div>
<div class="t" style="left:149.0px;top:52.1px;font-size:17.6px;color:#f2f2f2;font-weight:normal;">Options</div>
<div class="t" style="left:246.0px;top:52.1px;font-size:17.6px;color:#f2f2f2;font-weight:normal;">Tools</div>
<div class="t" style="left:321.0px;top:52.1px;font-size:17.6px;color:#f2f2f2;font-weight:normal;">Configure</div>
<div class="t" style="left:433.0px;top:52.1px;font-size:17.6px;color:#f2f2f2;font-weight:normal;">Generate</div>
<div class="t" style="left:539.0px;top:52.1px;font-size:17.6px;color:#f2f2f2;font-weight:normal;">Data</div>
<div class="t" style="left:609.0px;top:52.1px;font-size:17.6px;color:#f2f2f2;font-weight:normal;">Help</div>
<div class="a" style="left:1538px;top:53px;width:25px;height:17px;background:#5c5e60;border-radius:9px"></div>
<div class="t" style="left:1574.0px;top:54.8px;font-size:17.4px;color:#f2f2f2;font-weight:normal;">Use Toolboxes:</div>
<div class="a" style="left:1695px;top:43px;width:44px;height:36px;background:#595c5f;border-radius:8px"></div>
<div class="a" style="left:1743px;top:43px;width:44px;height:36px;background:#595c5f;border-radius:8px"></div>
<div class="a" style="left:1791px;top:43px;width:44px;height:36px;background:#595c5f;border-radius:8px"></div>
<div class="a" style="left:1839px;top:43px;width:44px;height:36px;background:#595c5f;border-radius:8px"></div>
<div class="a" style="left:1887px;top:43px;width:44px;height:36px;background:#595c5f;border-radius:8px"></div>
<div class="a" style="left:1935px;top:43px;width:44px;height:36px;background:#595c5f;border-radius:8px"></div>
<div class="a" style="left:1983px;top:43px;width:44px;height:36px;background:#8b9195;border-radius:8px"></div>
<div class="a" style="left:2031px;top:43px;width:44px;height:36px;background:#595c5f;border-radius:8px"></div>
<svg class="a" style="left:1702px;top:46px;" width="30" height="30" viewBox="0 0 30 30"><rect x="1.5" y="1.5" width="27" height="27" fill="#fff" stroke="#b02020" stroke-width="3"/><rect x="7" y="11" width="16" height="8" fill="#90e060"/></svg>
<svg class="a" style="left:1750px;top:46px;" width="30" height="30" viewBox="0 0 30 30"><g fill="#fff" stroke="#b02020" stroke-width="2.5"><path d="M6,3H28L24,10H2Z"/><path d="M6,12H28L24,19H2Z"/><path d="M6,21H28L24,28H2Z"/></g></svg>
<svg class="a" style="left:1798px;top:46px;" width="30" height="30" viewBox="0 0 30 30"><path d="M8,3C16,1 18,8 14,12L12,18L22,28H6L10,18C4,12 4,5 8,3Z" fill="#5a8a30" opacity="0.9"/></svg>
<svg class="a" style="left:1846px;top:46px;" width="30" height="30" viewBox="0 0 30 30"><path d="M8,2H11V5H14V2H17V5H20V2H23V9L21,11V28H10V11L8,9Z" fill="#000"/><circle cx="13" cy="16" r="1" fill="#fff"/><circle cx="17" cy="22" r="1" fill="#fff"/></svg>
<svg class="a" style="left:1890px;top:44px;" width="36" height="34" viewBox="0 0 36 34"><path d="M4,9L16,5L27,17L33,25L31,27L19,24L13,31L9,29L12,18Z" fill="#fff" stroke="#b81a1a" stroke-width="2.6" stroke-linejoin="round"/></svg>
<div class="t" style="left:1940.0px;top:54.6px;font-size:17px;color:#111;font-weight:bold;letter-spacing:-1px">Label</div>
<svg class="a" style="left:1991px;top:47px;" width="28" height="28" viewBox="0 0 28 28"><rect width="28" height="28" fill="#1a6ab0"/><path d="M10,28V16L16,12L20,5H28V28Z" fill="#9ad060"/></svg>
<svg class="a" style="left:2035px;top:45px;" width="38" height="34" viewBox="0 0 38 34"><g stroke="#c01818" stroke-width="2.5"><path d="M8,2H36L30,14H2Z" fill="#2a70c0"/><path d="M8,18H36L30,31H2Z" fill="#2a70c0"/></g><path d="M12,8L20,6L26,8" stroke="#9ad060" stroke-width="3"/><path d="M12,24L20,22L26,24" stroke="#9ad060" stroke-width="3"/></svg>
<div class="a" style="left:0px;top:82px;width:1283px;height:46px;background:linear-gradient(#55595c,#5e6265)"></div>
<div class="a" style="left:8px;top:91px;width:97px;height:37px;background:linear-gradient(#5a5e61,#53575a);border:1px solid #3b3e41;border-bottom:none;border-radius:5px 5px 0 0"></div>
<div class="t" style="left:21.0px;top:101.8px;font-size:18px;color:#f2f2f2;font-weight:normal;">Map 1</div>
<svg class="a" style="left:80px;top:102px;" width="13" height="13" viewBox="0 0 13 13"><path d="M1,1L12,12M12,1L1,12" stroke="#fff" stroke-width="2.2"/></svg>
<div class="a" style="left:0px;top:126px;width:1283px;height:2px;background:#3b3e41"></div>
<div class="a" style="left:0px;top:128px;width:4px;height:1762px;background:#5a5e61"></div>
<div class="a" style="left:1257px;top:128px;width:26px;height:1735px;background:#383b3e;border-left:4px solid #505457"></div>
<svg class="a" style="left:1268px;top:1850px;" width="14" height="8" viewBox="0 0 14 8"><path d="M1,1L7,7L13,1" fill="none" stroke="#2a2c2e" stroke-width="1.5"/></svg>
<div class="a" style="left:4px;top:1863px;width:1253px;height:26px;background:linear-gradient(#3f4245,#35383a);border-top:4px solid #505457"></div>
<div class="a" style="left:441px;top:1873px;width:26px;height:14px;border:1.2px solid #2a2c2e;border-radius:4px;background:#3a3d40"></div>
<svg class="a" style="left:6px;top:1870px;" width="8" height="14" viewBox="0 0 8 14"><path d="M7,1L1,7L7,13" fill="none" stroke="#2a2c2e" stroke-width="1.5"/></svg>
<svg class="a" style="left:1244px;top:1870px;" width="8" height="14" viewBox="0 0 8 14"><path d="M1,1L7,7L1,13" fill="none" stroke="#2a2c2e" stroke-width="1.5"/></svg>
<div class="a" style="left:1257px;top:1863px;width:26px;height:26px;background:#505457"></div>
<div class="a" style="left:1283px;top:82px;width:10px;height:1807px;background:linear-gradient(90deg,#121314 0,#121314 1.5px,#5f6366 3px,#6a6e71 40%,#3a3d40 80%,#121314 100%)"></div>
<div class="a" style="left:1293px;top:82px;width:783px;height:1807px;background:#505357"></div>
<div class="a" style="left:1549px;top:91px;width:207px;height:300px;background:#000;border-right:4px solid #fff"></div>
<svg class="a" style="left:1549px;top:382px;" width="207" height="9" viewBox="0 0 207 9"><rect y="4.5" width="207" height="4.5" fill="#fff"/><rect x="11.0" y="1" width="4" height="4" fill="#fff"/><rect x="23.9" y="1" width="4" height="4" fill="#fff"/><rect x="36.7" y="1" width="4" height="4" fill="#fff"/><rect x="49.5" y="1" width="4" height="4" fill="#fff"/><rect x="62.4" y="1" width="4" height="4" fill="#fff"/><rect x="75.2" y="1" width="4" height="4" fill="#fff"/><rect x="88.1" y="1" width="4" height="4" fill="#fff"/><rect x="101.0" y="1" width="4" height="4" fill="#fff"/><rect x="113.8" y="1" width="4" height="4" fill="#fff"/><rect x="126.6" y="1" width="4" height="4" fill="#fff"/><rect x="139.5" y="1" width="4" height="4" fill="#fff"/><rect x="152.3" y="1" width="4" height="4" fill="#fff"/><rect x="165.2" y="1" width="4" height="4" fill="#fff"/><rect x="178.0" y="1" width="4" height="4" fill="#fff"/><rect x="190.9" y="1" width="4" height="4" fill="#fff"/></svg>
<div class="a" style="left:1590px;top:152px;width:89px;height:123px;background:#004a00;border:1.6px solid #e6e600"></div>
<div class="a" style="left:1763px;top:93px;width:56px;height:92px;background:#5c5e60;border-radius:8px"></div>
<svg class="a" style="left:1766px;top:94px;" width="48" height="48" viewBox="0 0 48 48"><g fill="#000"><path d="M14,2L19,8H16V13H21V10L27,15L21,20V17H16V22H19L14,28L9,22H12V17H7V20L1,15L7,10V13H12V8H9Z"/></g><g transform="translate(4,-1) scale(1.1)"><path d="M22,40C18,34 17,30 19,27C20,25 22,26 23,28V16C23,13 27,13 27,16V24V14C27,11 31,11 31,14V24V15C31,12 35,12 35,15V25V18C35,15 39,15 39,18V32C39,38 36,42 31,42Z" fill="#fff" stroke="#000" stroke-width="1.5" transform="rotate(-12 30 30)"/></g></svg>
<div class="t" style="left:1791.0px;top:150.1px;width:0;font-size:14px;color:#f0f0f0;font-weight:normal;display:flex;justify-content:center;">Pan</div>
<div class="t" style="left:1791.0px;top:170.1px;width:0;font-size:14px;color:#f0f0f0;font-weight:normal;display:flex;justify-content:center;">(Ctrl-P)</div>
<div class="a" style="left:1763px;top:190px;width:56px;height:74px;background:#5c5e60;border-radius:8px"></div>
<svg class="a" style="left:1769px;top:194px;" width="46" height="40" viewBox="0 0 46 40"><g fill="none" stroke="#454647" stroke-width="6.5"><path d="M6.6,17.5A16,16 0 0 1 37,15"/><path d="M38,22A16,16 0 0 1 7,24"/></g><path d="M32,13L45,13L38.5,22Z" fill="#454647"/><path d="M0,25L13,25L6.5,16Z" fill="#454647"/></svg>
<div class="t" style="left:1791.0px;top:247.1px;width:0;font-size:14px;color:#f0f0f0;font-weight:normal;display:flex;justify-content:center;">Refresh</div>
<div class="t" style="right:473.0px;top:413.2px;font-size:17.5px;color:#f2f2f2;font-weight:normal;">Tile Width:</div>
<div class="a" style="left:1608px;top:407px;width:88px;height:28px;background:#2f3234;border-radius:6px;border:1px solid #2a2c2e"></div><div class="a" style="left:1609px;top:408px;width:60px;height:26px;background:linear-gradient(#777a7d,#66696c);border-radius:6px 0 0 6px"></div><div class="t" style="left:1615.0px;top:412.7px;font-size:17.5px;color:#111;font-weight:normal;">81.81</div><div class="a" style="left:1669px;top:420.5px;width:25px;height:1px;background:#555"></div><svg class="a" style="left:1674.5px;top:410.0px;" width="14" height="8" viewBox="0 0 14 8"><path d="M0,8H14L7,0Z" fill="#fff"/></svg><svg class="a" style="left:1674.5px;top:424.0px;" width="14" height="8" viewBox="0 0 14 8"><path d="M0,0H14L7,8Z" fill="#fff"/></svg>
<div class="t" style="left:1705.0px;top:413.2px;font-size:17.5px;color:#f2f2f2;font-weight:normal;">Height:</div>
<div class="a" style="left:1767px;top:407px;width:88px;height:28px;background:#2f3234;border-radius:6px;border:1px solid #2a2c2e"></div><div class="a" style="left:1768px;top:408px;width:60px;height:26px;background:linear-gradient(#777a7d,#66696c);border-radius:6px 0 0 6px"></div><div class="t" style="left:1774.0px;top:412.7px;font-size:17.5px;color:#111;font-weight:normal;">70.86</div><div class="a" style="left:1828px;top:420.5px;width:25px;height:1px;background:#555"></div><svg class="a" style="left:1833.5px;top:410.0px;" width="14" height="8" viewBox="0 0 14 8"><path d="M0,8H14L7,0Z" fill="#fff"/></svg><svg class="a" style="left:1833.5px;top:424.0px;" width="14" height="8" viewBox="0 0 14 8"><path d="M0,0H14L7,8Z" fill="#fff"/></svg>
<div class="a" style="left:1548px;top:453px;width:25px;height:38px;background:#5a5d60;border-radius:9px"></div>
<div class="t" style="left:1553.0px;top:463.8px;font-size:18px;color:#fff;font-weight:normal;">+</div>
<div class="a" style="left:1576px;top:453px;width:18px;height:38px;background:#5a5d60;border-radius:9px"></div>
<div class="t" style="left:1580.0px;top:462.8px;font-size:18px;color:#fff;font-weight:normal;">-</div>
<div class="a" style="left:1610px;top:463px;width:26px;height:18px;background:#5c5e60;border-radius:9px"></div><svg class="a" style="left:1613px;top:461px;" width="22" height="22" viewBox="0 0 22 22"><path d="M3,11 L9,18 L19,3" fill="none" stroke="#fff" stroke-width="2.6" stroke-linecap="round" stroke-linejoin="round"/></svg>
<div class="t" style="left:1645.0px;top:465.4px;font-size:17.2px;color:#f2f2f2;font-weight:normal;">Preserve Aspect Ratio</div>
<div class="t" style="right:518.0px;top:548.2px;font-size:17.5px;color:#f2f2f2;font-weight:normal;">Range:</div>
<div class="a" style="left:1564px;top:545px;width:147px;height:22px;background:#8b8f92;border-radius:4px;border:1px solid #6a6d70"></div>
<div class="t" style="left:1716.0px;top:550.9px;font-size:13.1px;color:#f4f4f4;font-weight:normal;">Mem Free:380 Total:1824 Max:24400</div>
<div class="a" style="left:1295px;top:569px;width:781px;height:3px;background:#2b2d2f"></div>
<div class="a" style="left:1295px;top:573px;width:744px;height:35px;background:linear-gradient(#3f4245,#333538);border:1px solid #2a2c2e"></div>
<div class="a" style="left:1295px;top:610px;width:744px;height:36px;background:linear-gradient(#3f4245,#333538);border:1px solid #2a2c2e"></div>
<div class="a" style="left:1295px;top:648px;width:744px;height:36px;background:linear-gradient(#3f4245,#333538);border:1px solid #2a2c2e"></div>
<div class="a" style="left:1295px;top:685px;width:745px;height:1204px;background:#505357;border-right:1.5px solid #1e2022"></div>
<div class="a" style="left:2040px;top:572px;width:14px;height:1317px;background:#4f5356"></div>
<div class="a" style="left:2054px;top:572px;width:19px;height:1317px;background:linear-gradient(90deg,#34373a,#3d4043 50%,#34373a)"></div>
<svg class="a" style="left:2056px;top:576px;" width="14" height="10" viewBox="0 0 14 10"><path d="M1,8L7,2L13,8" fill="none" stroke="#25272a" stroke-width="1.6"/></svg>
<div class="a" style="left:2058px;top:593px;width:12px;height:1275px;border:1.3px solid #2a2c2e;border-radius:6px;background:linear-gradient(90deg,#3a3d40,#45484b,#3a3d40)"></div>
<svg class="a" style="left:2056px;top:1872px;" width="14" height="10" viewBox="0 0 14 10"><path d="M1,2L7,8L13,2" fill="none" stroke="#25272a" stroke-width="1.6"/></svg>
<div class="a" style="left:2073px;top:572px;width:3px;height:1317px;background:#505357"></div>
<div class="a" style="left:1490px;top:702px;width:200px;height:38px;background:#5e6061;border-radius:9px"></div><div class="t" style="left:1542.0px;top:712.7px;font-size:17.5px;color:#fff;font-weight:normal;">Cosmic</div><svg class="a" style="left:1661.0px;top:718.0px;" width="14" height="8" viewBox="0 0 14 8"><path d="M0,0H14L7.0,8Z" fill="#fff"/></svg>
<div class="a" style="left:1310px;top:752px;width:92px;height:89px;background:#5f6061;border-radius:10px"></div>
<div class="a" style="left:1414px;top:752px;width:92px;height:89px;background:#5f6061;border-radius:10px"></div>
<div class="a" style="left:1519px;top:752px;width:92px;height:89px;background:#5f6061;border-radius:10px"></div>
<div class="a" style="left:1310px;top:854px;width:92px;height:89px;background:#5f6061;border-radius:10px"></div>
<div class="a" style="left:1414px;top:854px;width:92px;height:89px;background:#5f6061;border-radius:10px"></div>
<div class="a" style="left:1519px;top:854px;width:92px;height:89px;background:#5f6061;border-radius:10px"></div>
<div class="a" style="left:1310px;top:955px;width:92px;height:89px;background:#5f6061;border-radius:10px"></div>
<div class="a" style="left:1414px;top:955px;width:92px;height:89px;background:#5f6061;border-radius:10px"></div>
<div class="a" style="left:1519px;top:955px;width:92px;height:89px;background:#5f6061;border-radius:10px"></div>
<div class="a" style="left:1310px;top:1057px;width:92px;height:89px;background:#5f6061;border-radius:10px"></div>
<div class="a" style="left:1414px;top:1057px;width:92px;height:89px;background:#5f6061;border-radius:10px"></div>
<div class="a" style="left:1519px;top:1057px;width:92px;height:89px;background:#5f6061;border-radius:10px"></div>
<div class="a" style="left:1310px;top:1158px;width:92px;height:89px;background:#5f6061;border-radius:10px"></div>
<div class="a" style="left:1414px;top:1158px;width:92px;height:89px;background:#5f6061;border-radius:10px"></div>
<div class="a" style="left:1519px;top:1158px;width:92px;height:89px;background:#5f6061;border-radius:10px"></div>
<div class="a" style="left:1310px;top:1257px;width:92px;height:89px;background:#5f6061;border-radius:10px"></div>
<div class="a" style="left:1414px;top:1257px;width:92px;height:89px;background:#5f6061;border-radius:10px"></div>
<div class="a" style="left:1519px;top:1257px;width:92px;height:89px;background:#5f6061;border-radius:10px"></div>
<div class="a" style="left:1310px;top:1358px;width:92px;height:89px;background:#5f6061;border-radius:10px"></div>
<div class="a" style="left:1414px;top:1358px;width:92px;height:89px;background:#5f6061;border-radius:10px"></div>
<div class="a" style="left:1519px;top:1358px;width:92px;height:89px;background:#5f6061;border-radius:10px"></div>
<div class="a" style="left:1310px;top:1459px;width:92px;height:89px;background:#5f6061;border-radius:10px"></div>
<div class="a" style="left:1414px;top:1459px;width:92px;height:89px;background:#5f6061;border-radius:10px"></div>
<div class="a" style="left:1519px;top:1459px;width:92px;height:89px;background:#5f6061;border-radius:10px"></div>
<svg class="a" style="left:1309px;top:0px;" width="310" height="1560" viewBox="0 0 310 1560"><defs><radialGradient id="gw" cx="0.35" cy="0.35" r="0.8"><stop offset="0" stop-color="#fff"/><stop offset="1" stop-color="#c8c8c8"/></radialGradient><radialGradient id="gy" cx="0.4" cy="0.4" r="0.7"><stop offset="0" stop-color="#fffbe0"/><stop offset="0.6" stop-color="#f4e030"/><stop offset="1" stop-color="#e8cc10"/></radialGradient><linearGradient id="gt" x1="0" y1="0" x2="0" y2="1"><stop offset="0" stop-color="#c8c8c8"/><stop offset="1" stop-color="#f0f0f0"/></linearGradient></defs><circle cx="255.5" cy="796" r="22" fill="url(#gw)"/><circle cx="255.5" cy="897" r="22" fill="#2b4acd"/><circle cx="255.5" cy="998" r="22" fill="#c9bb7b"/><clipPath id="cg"><circle cx="255.5" cy="1100" r="22"/></clipPath><circle cx="255.5" cy="1100" r="22" fill="#fff"/><rect clip-path="url(#cg)" x="225" y="1084" width="60" height="30" fill="#18a018"/><circle cx="48" cy="1200" r="22" fill="url(#gw)"/><ellipse cx="48" cy="1204" rx="30" ry="8" transform="rotate(-18 48 1204)" fill="none" stroke="#000" stroke-width="4.5"/><ellipse cx="48" cy="1204" rx="30" ry="8" transform="rotate(-18 48 1204)" fill="none" stroke="#fff" stroke-width="2"/><path d="M26,1204A22,22 0 0 0 70,1196" fill="url(#gw)" transform="rotate(-5 48 1200)"/><g fill="url(#gt)"><rect x="140" y="1180" width="22" height="45"/><ellipse cx="151" cy="1199" rx="16" ry="3.2"/><ellipse cx="151" cy="1211" rx="16" ry="3.2"/></g><ellipse cx="151" cy="1179" rx="21" ry="7.5" fill="#cfcfcf"/><path d="M283,1172.4L281.4,1176L267,1197.6L264.6,1200.8L263,1210.4L261.4,1213.6L244.2,1233.2L246.2,1214.4L227,1217.6L245.4,1197.6L259,1192.8L275,1177.6Z" fill="#000"/><circle cx="48" cy="1301" r="12.5" fill="#f8fff0" stroke="#333" stroke-width="0.8" stroke-dasharray="2 1"/><circle cx="151" cy="1301" r="12.5" fill="#88f8ff" stroke="#333" stroke-width="0.8" stroke-dasharray="2 1"/><circle cx="256" cy="1301" r="12.5" fill="#fdf0c0" stroke="#333" stroke-width="0.8" stroke-dasharray="2 1"/><circle cx="48" cy="1402" r="12.5" fill="#ffff00" stroke="#333" stroke-width="0.8" stroke-dasharray="2 1"/><circle cx="151" cy="1402" r="12.5" fill="#ff9050" stroke="#333" stroke-width="0.8" stroke-dasharray="2 1"/><circle cx="256" cy="1402" r="12.5" fill="#ff0000" stroke="#333" stroke-width="0.8" stroke-dasharray="2 1"/><circle cx="48" cy="1503" r="12.5" fill="#0090ff" stroke="#333" stroke-width="0.8" stroke-dasharray="2 1"/><path d="M172.8,1499.7L179.0,1503.0L172.8,1506.3ZM172.4,1508.3L176.9,1513.7L169.8,1514.4ZM168.7,1516.1L170.8,1522.8L164.1,1520.7ZM162.4,1521.8L161.7,1528.9L156.3,1524.4ZM154.3,1524.8L151.0,1531.0L147.7,1524.8ZM145.7,1524.4L140.3,1528.9L139.6,1521.8ZM137.9,1520.7L131.2,1522.8L133.3,1516.1ZM132.2,1514.4L125.1,1513.7L129.6,1508.3ZM129.2,1506.3L123.0,1503.0L129.2,1499.7ZM129.6,1497.7L125.1,1492.3L132.2,1491.6ZM133.3,1489.9L131.2,1483.2L137.9,1485.3ZM139.6,1484.2L140.3,1477.1L145.7,1481.6ZM147.7,1481.2L151.0,1475.0L154.3,1481.2ZM156.3,1481.6L161.7,1477.1L162.4,1484.2ZM164.1,1485.3L170.8,1483.2L168.7,1489.9ZM169.8,1491.6L176.9,1492.3L172.4,1497.7Z" fill="#fff"/><circle cx="151" cy="1503" r="22.5" fill="#fff" stroke="#000" stroke-width="1.8"/><circle cx="256" cy="1503" r="26" fill="url(#gy)"/><path d="M232,1490C228,1510 240,1530 262,1528C282,1526 290,1505 282,1490" fill="none" stroke="#f4e030" stroke-width="3"/><path d="M272,1482C286,1484 292,1494 286,1504" fill="none" stroke="#f0d820" stroke-width="3"/></svg>
<div class="a" style="left:1750px;top:750px;width:28px;height:28px;background:#5a5d60;border-radius:14px"></div>
<svg class="a" style="left:1752px;top:752px;" width="24" height="24" viewBox="0 0 24 24"><polygon points="21.32,10.15 21.50,12.00 18.87,13.37 18.47,14.68 19.90,17.28 18.72,18.72 15.89,17.82 14.68,18.47 13.85,21.32 12.00,21.50 10.63,18.87 9.32,18.47 6.72,19.90 5.28,18.72 6.18,15.89 5.53,14.68 2.68,13.85 2.50,12.00 5.13,10.63 5.53,9.32 4.10,6.72 5.28,5.28 8.11,6.18 9.32,5.53 10.15,2.68 12.00,2.50 13.37,5.13 14.68,5.53 17.28,4.10 18.72,5.28 17.82,8.11 18.47,9.32" fill="#85878a"/><circle cx="12" cy="12" r="4.3" fill="#5c5e60"/></svg>
<div class="a" style="left:1810px;top:752px;width:56px;height:74px;background:#5c5e60;border-radius:8px"></div>
<div class="a" style="left:1870px;top:752px;width:60px;height:74px;background:#5c5e60;border-radius:8px"></div>
<div class="a" style="left:1960px;top:752px;width:56px;height:74px;background:#5c5e60;border-radius:8px"></div>
<svg class="a" style="left:1812px;top:754px;" width="52" height="46" viewBox="0 0 52 46"><circle cx="20" cy="18" r="17" fill="#ffdd00"/><path d="M20,16L40,40" stroke="#000" stroke-width="5"/><path d="M15,10L33,16L21,28Z" fill="#000"/></svg>
<div class="t" style="left:1838.0px;top:810.1px;width:0;font-size:14px;color:#f0f0f0;font-weight:normal;display:flex;justify-content:center;">Select</div>
<svg class="a" style="left:1882px;top:752px;" width="36" height="32" viewBox="0 0 36 32"><rect x="2" y="6" width="32" height="24" fill="#fff" stroke="#000" stroke-width="1.5"/><g stroke="#000" stroke-width="2"><path d="M8,2V9M14,2V9M20,2V9M26,2V9"/></g><g stroke="#4aa0d0" stroke-width="1.5"><path d="M5,15H31M5,20H31M5,25H31"/></g></svg>
<div class="t" style="left:1900.0px;top:791.1px;width:0;font-size:14px;color:#f0f0f0;font-weight:normal;display:flex;justify-content:center;">Notes of</div>
<div class="t" style="left:1900.0px;top:811.1px;width:0;font-size:14px;color:#f0f0f0;font-weight:normal;display:flex;justify-content:center;">Selected</div>
<svg class="a" style="left:1966px;top:756px;" width="46" height="44" viewBox="0 0 46 44"><circle cx="20" cy="20" r="17" fill="#ffdd00"/><path d="M8,10L38,36M36,8L10,38" stroke="#a01010" stroke-width="6"/></svg>
<div class="t" style="left:1988.0px;top:810.1px;width:0;font-size:14px;color:#f0f0f0;font-weight:normal;display:flex;justify-content:center;">Delete</div>
<div class="t" style="left:1624.0px;top:833.2px;font-size:17.5px;color:#f2f2f2;font-weight:normal;">Change Z-Axis:</div>
<div class="a" style="left:1622px;top:856px;width:56px;height:48px;background:#5c5e60;border-radius:8px"></div>
<svg class="a" style="left:1622px;top:856px;" width="56" height="48" viewBox="0 0 56 48"><g fill="#fff" stroke="#000" stroke-width="1.8"><rect x="25" y="10" width="24" height="7"/><rect x="25" y="22" width="24" height="7"/><rect x="25" y="34" width="24" height="7"/></g><path d="M16,6C4,16 6,32 16,40" fill="none" stroke="#000" stroke-width="3.6"/><path d="M13,2L24,5L15,12Z" fill="#000"/></svg>
<div class="a" style="left:1682px;top:856px;width:56px;height:48px;background:#5c5e60;border-radius:8px"></div>
<svg class="a" style="left:1682px;top:856px;" width="56" height="48" viewBox="0 0 56 48"><g fill="#fff" stroke="#000" stroke-width="1.8"><rect x="25" y="6" width="24" height="7"/><rect x="25" y="18" width="24" height="7"/><rect x="25" y="32" width="24" height="7"/></g><path d="M20,38C10,36 10,26 18,22" fill="none" stroke="#000" stroke-width="3.6"/><path d="M15,17L25,20L17,27Z" fill="#000"/></svg>
<div class="a" style="left:1742px;top:856px;width:56px;height:48px;background:#5c5e60;border-radius:8px"></div>
<svg class="a" style="left:1742px;top:856px;" width="56" height="48" viewBox="0 0 56 48"><g fill="#fff" stroke="#000" stroke-width="1.8"><rect x="25" y="6" width="24" height="7"/><rect x="25" y="18" width="24" height="7"/><rect x="25" y="32" width="24" height="7"/></g><path d="M20,10C10,12 10,22 18,26" fill="none" stroke="#000" stroke-width="3.6"/><path d="M15,31L25,28L17,21Z" fill="#000"/></svg>
<div class="a" style="left:1802px;top:856px;width:56px;height:48px;background:#5c5e60;border-radius:8px"></div>
<svg class="a" style="left:1802px;top:856px;" width="56" height="48" viewBox="0 0 56 48"><g fill="#fff" stroke="#000" stroke-width="1.8"><rect x="25" y="4" width="24" height="7"/><rect x="25" y="16" width="24" height="7"/><rect x="25" y="28" width="24" height="7"/></g><path d="M16,4C4,14 6,30 16,38" fill="none" stroke="#000" stroke-width="3.6"/><path d="M13,43L24,40L15,33Z" fill="#000"/></svg>
<div class="t" style="left:1624.0px;top:912.2px;font-size:17.5px;color:#f8f8f8;font-weight:bold;">Options:</div>
<div class="a" style="left:1623px;top:937px;width:26px;height:18px;background:#5c5e60;border-radius:9px"></div>
<div class="t" style="left:1658.0px;top:938.2px;font-size:17.5px;color:#f2f2f2;font-weight:normal;">Hide Terrain Icon</div>
<div class="a" style="left:1623px;top:963px;width:26px;height:18px;background:#5c5e60;border-radius:9px"></div>
<div class="t" style="left:1658.0px;top:964.2px;font-size:17.5px;color:#f2f2f2;font-weight:normal;">Place Freely</div>
<div class="a" style="left:1623px;top:991px;width:26px;height:18px;background:#5c5e60;border-radius:9px"></div>
<div class="t" style="left:1658.0px;top:992.2px;font-size:17.5px;color:#f2f2f2;font-weight:normal;">Override color:</div>
<div class="a" style="left:1623px;top:1019px;width:26px;height:18px;background:#5c5e60;border-radius:9px"></div>
<div class="t" style="left:1658.0px;top:1020.2px;font-size:17.5px;color:#f2f2f2;font-weight:normal;">Fill Tile Bottom</div>
<div class="a" style="left:1623px;top:1047px;width:26px;height:18px;background:#5c5e60;border-radius:9px"></div>
<div class="t" style="left:1658.0px;top:1048.2px;font-size:17.5px;color:#f2f2f2;font-weight:normal;">Add Ring</div>
<div class="a" style="left:1623px;top:1075px;width:26px;height:18px;background:#5c5e60;border-radius:9px"></div>
<div class="t" style="left:1658.0px;top:1076.2px;font-size:17.5px;color:#f2f2f2;font-weight:normal;">Override Default Scale:</div>
<div class="a" style="left:1623px;top:1131px;width:26px;height:18px;background:#5c5e60;border-radius:9px"></div>
<div class="t" style="left:1658.0px;top:1132.2px;font-size:17.5px;color:#f2f2f2;font-weight:normal;">Scale height independent:</div>
<div class="a" style="left:1623px;top:1272px;width:26px;height:18px;background:#5c5e60;border-radius:9px"></div>
<div class="t" style="left:1658.0px;top:1273.2px;font-size:17.5px;color:#f2f2f2;font-weight:normal;">GM Only</div>
<div class="a" style="left:1803px;top:986px;width:146px;height:27px;background:#5e6061;border-radius:9px"></div><div class="a" style="left:1810px;top:989.5px;width:20px;height:20px;background:#fff;border:2px solid #111"></div><div class="t" style="left:1837.0px;top:991.2px;font-size:17.5px;color:#fff;font-weight:normal;">White</div><svg class="a" style="left:1920.0px;top:996.5px;" width="14" height="8" viewBox="0 0 14 8"><path d="M0,0H14L7.0,8Z" fill="#fff"/></svg>
<div class="a" style="left:1803px;top:1042px;width:146px;height:27px;background:#5e6061;border-radius:9px"></div><div class="a" style="left:1810px;top:1045.5px;width:20px;height:20px;background:#fff;border:2px solid #111"></div><div class="t" style="left:1837.0px;top:1047.2px;font-size:17.5px;color:#fff;font-weight:normal;">White</div><svg class="a" style="left:1920.0px;top:1052.5px;" width="14" height="8" viewBox="0 0 14 8"><path d="M0,0H14L7.0,8Z" fill="#fff"/></svg>
<div class="t" style="left:1624.0px;top:1104.2px;font-size:17.5px;color:#f2f2f2;font-weight:normal;">Size (tile%):</div>
<div class="a" style="left:1802px;top:1097px;width:118px;height:28px;background:#2f3234;border-radius:6px;border:1px solid #2a2c2e"></div><div class="a" style="left:1803px;top:1098px;width:82px;height:26px;background:linear-gradient(#777a7d,#66696c);border-radius:6px 0 0 6px"></div><div class="t" style="left:1809.0px;top:1102.7px;font-size:17.5px;color:#111;font-weight:normal;">75</div><div class="a" style="left:1885px;top:1110.5px;width:33px;height:1px;background:#555"></div><svg class="a" style="left:1894.5px;top:1100.0px;" width="14" height="8" viewBox="0 0 14 8"><path d="M0,8H14L7,0Z" fill="#fff"/></svg><svg class="a" style="left:1894.5px;top:1114.0px;" width="14" height="8" viewBox="0 0 14 8"><path d="M0,0H14L7,8Z" fill="#fff"/></svg>
<div class="a" style="left:1802px;top:1153px;width:118px;height:28px;background:#2f3234;border-radius:6px;border:1px solid #2a2c2e"></div><div class="a" style="left:1803px;top:1154px;width:82px;height:26px;background:linear-gradient(#777a7d,#66696c);border-radius:6px 0 0 6px"></div><div class="t" style="left:1809.0px;top:1158.7px;font-size:17.5px;color:#111;font-weight:normal;">75</div><div class="a" style="left:1885px;top:1166.5px;width:33px;height:1px;background:#555"></div><svg class="a" style="left:1894.5px;top:1156.0px;" width="14" height="8" viewBox="0 0 14 8"><path d="M0,8H14L7,0Z" fill="#fff"/></svg><svg class="a" style="left:1894.5px;top:1170.0px;" width="14" height="8" viewBox="0 0 14 8"><path d="M0,0H14L7,8Z" fill="#fff"/></svg>
<div class="t" style="left:1624.0px;top:1190.2px;font-size:17.5px;color:#f2f2f2;font-weight:normal;">Rotate (clockwise):</div>
<div class="a" style="left:1802px;top:1183px;width:73px;height:28px;background:#2f3234;border-radius:6px;border:1px solid #2a2c2e"></div><div class="a" style="left:1803px;top:1184px;width:38px;height:26px;background:linear-gradient(#777a7d,#66696c);border-radius:6px 0 0 6px"></div><div class="t" style="left:1809.0px;top:1188.7px;font-size:17.5px;color:#111;font-weight:normal;">0</div><div class="a" style="left:1841px;top:1196.5px;width:32px;height:1px;background:#555"></div><svg class="a" style="left:1850.0px;top:1186.0px;" width="14" height="8" viewBox="0 0 14 8"><path d="M0,8H14L7,0Z" fill="#fff"/></svg><svg class="a" style="left:1850.0px;top:1200.0px;" width="14" height="8" viewBox="0 0 14 8"><path d="M0,0H14L7,8Z" fill="#fff"/></svg>
<div class="a" style="left:1623px;top:1214px;width:40px;height:26px;background:#5c5e60;border-radius:10px"></div>
<div class="t" style="left:1643.0px;top:1219.2px;width:0;font-size:17.5px;color:#f2f2f2;font-weight:normal;display:flex;justify-content:center;">0°</div>
<div class="a" style="left:1667px;top:1214px;width:45px;height:26px;background:#5c5e60;border-radius:10px"></div>
<div class="t" style="left:1689.5px;top:1219.2px;width:0;font-size:17.5px;color:#f2f2f2;font-weight:normal;display:flex;justify-content:center;">45°</div>
<div class="a" style="left:1716px;top:1214px;width:45px;height:26px;background:#5c5e60;border-radius:10px"></div>
<div class="t" style="left:1738.5px;top:1219.2px;width:0;font-size:17.5px;color:#f2f2f2;font-weight:normal;display:flex;justify-content:center;">90°</div>
<div class="a" style="left:1765px;top:1214px;width:46px;height:26px;background:#5c5e60;border-radius:10px"></div>
<div class="t" style="left:1788.0px;top:1219.2px;width:0;font-size:17.5px;color:#f2f2f2;font-weight:normal;display:flex;justify-content:center;">135°</div>
<div class="a" style="left:1813px;top:1214px;width:47px;height:26px;background:#5c5e60;border-radius:10px"></div>
<div class="t" style="left:1836.5px;top:1219.2px;width:0;font-size:17.5px;color:#f2f2f2;font-weight:normal;display:flex;justify-content:center;">180°</div>
<div class="a" style="left:1862px;top:1214px;width:46px;height:26px;background:#5c5e60;border-radius:10px"></div>
<div class="t" style="left:1885.0px;top:1219.2px;width:0;font-size:17.5px;color:#f2f2f2;font-weight:normal;display:flex;justify-content:center;">225°</div>
<div class="a" style="left:1910px;top:1214px;width:46px;height:26px;background:#5c5e60;border-radius:10px"></div>
<div class="t" style="left:1933.0px;top:1219.2px;width:0;font-size:17.5px;color:#f2f2f2;font-weight:normal;display:flex;justify-content:center;">270°</div>
<div class="a" style="left:1958px;top:1214px;width:44px;height:26px;background:#5c5e60;border-radius:10px"></div>
<div class="t" style="left:1980.0px;top:1219.2px;width:0;font-size:17.5px;color:#f2f2f2;font-weight:normal;display:flex;justify-content:center;">315°</div>
<div class="t" style="left:1624.0px;top:1248.2px;font-size:17.5px;color:#f2f2f2;font-weight:normal;">Flip:</div>
<div class="a" style="left:1802px;top:1247px;width:26px;height:18px;background:#5c5e60;border-radius:9px"></div>
<div class="t" style="left:1838.0px;top:1248.2px;font-size:17.5px;color:#f2f2f2;font-weight:normal;">Vertical</div>
<div class="a" style="left:1900px;top:1247px;width:26px;height:18px;background:#5c5e60;border-radius:9px"></div>
<div class="t" style="left:1935.0px;top:1248.2px;font-size:17.5px;color:#f2f2f2;font-weight:normal;">Horizontal</div>
<div class="t" style="left:1624.0px;top:1300.2px;font-size:17.5px;color:#f2f2f2;font-weight:normal;">Tags:</div>
<div class="t" style="left:1804.0px;top:1300.2px;font-size:17.5px;color:#f2f2f2;font-weight:normal;">Layer:</div>
<div class="a" style="left:1623px;top:1328px;width:176px;height:27px;background:#5e6061;border-radius:10px"></div>
<div class="a" style="left:1803px;top:1322px;width:177px;height:38px;background:#5e6061;border-radius:9px"></div><div class="t" style="left:1820.0px;top:1332.7px;font-size:17.5px;color:#fff;font-weight:normal;">Features</div><svg class="a" style="left:1951.0px;top:1338.0px;" width="14" height="8" viewBox="0 0 14 8"><path d="M0,0H14L7.0,8Z" fill="#fff"/></svg>
<div class="a" style="left:1628px;top:1369px;width:26px;height:18px;background:#5c5e60;border-radius:9px"></div><svg class="a" style="left:1631px;top:1367px;" width="22" height="22" viewBox="0 0 22 22"><path d="M3,11 L9,18 L19,3" fill="none" stroke="#fff" stroke-width="2.6" stroke-linecap="round" stroke-linejoin="round"/></svg>
<div class="t" style="left:1661.0px;top:1370.2px;font-size:17.5px;color:#f2f2f2;font-weight:normal;">World</div>
<div class="a" style="left:1740px;top:1369px;width:26px;height:18px;background:#5c5e60;border-radius:9px"></div><svg class="a" style="left:1743px;top:1367px;" width="22" height="22" viewBox="0 0 22 22"><path d="M3,11 L9,18 L19,3" fill="none" stroke="#fff" stroke-width="2.6" stroke-linecap="round" stroke-linejoin="round"/></svg>
<div class="t" style="left:1774.0px;top:1370.2px;font-size:17.5px;color:#f2f2f2;font-weight:normal;">Continent</div>
<div class="a" style="left:1628px;top:1399px;width:26px;height:18px;background:#5c5e60;border-radius:9px"></div><svg class="a" style="left:1631px;top:1397px;" width="22" height="22" viewBox="0 0 22 22"><path d="M3,11 L9,18 L19,3" fill="none" stroke="#fff" stroke-width="2.6" stroke-linecap="round" stroke-linejoin="round"/></svg>
<div class="t" style="left:1661.0px;top:1400.2px;font-size:17.5px;color:#f2f2f2;font-weight:normal;">Kingdom</div>
<div class="a" style="left:1740px;top:1399px;width:26px;height:18px;background:#5c5e60;border-radius:9px"></div><svg class="a" style="left:1743px;top:1397px;" width="22" height="22" viewBox="0 0 22 22"><path d="M3,11 L9,18 L19,3" fill="none" stroke="#fff" stroke-width="2.6" stroke-linecap="round" stroke-linejoin="round"/></svg>
<div class="t" style="left:1774.0px;top:1400.2px;font-size:17.5px;color:#f2f2f2;font-weight:normal;">Province</div>
<div class="t" style="left:1624.0px;top:1429.2px;font-size:17.5px;color:#f2f2f2;font-weight:normal;">Label:</div>
<div class="t" style="left:1804.0px;top:1429.2px;font-size:17.5px;color:#f2f2f2;font-weight:normal;">Distance:</div>
<div class="t" style="left:1901.0px;top:1429.2px;font-size:17.5px;color:#f2f2f2;font-weight:normal;">Position:</div>
<div class="a" style="left:1623px;top:1450px;width:176px;height:57px;background:#8e9295;border-radius:3px;border:1px solid #6d7073"></div>
<div class="a" style="left:1803px;top:1467px;width:87px;height:28px;background:#2f3234;border-radius:6px;border:1px solid #2a2c2e"></div><div class="a" style="left:1804px;top:1468px;width:52px;height:26px;background:linear-gradient(#777a7d,#66696c);border-radius:6px 0 0 6px"></div><div class="t" style="left:1810.0px;top:1472.7px;font-size:17.5px;color:#111;font-weight:normal;">0</div><div class="a" style="left:1856px;top:1480.5px;width:32px;height:1px;background:#555"></div><svg class="a" style="left:1865.0px;top:1470.0px;" width="14" height="8" viewBox="0 0 14 8"><path d="M0,8H14L7,0Z" fill="#fff"/></svg><svg class="a" style="left:1865.0px;top:1484.0px;" width="14" height="8" viewBox="0 0 14 8"><path d="M0,0H14L7,8Z" fill="#fff"/></svg>
<div class="a" style="left:1901px;top:1460px;width:115px;height:37px;background:#5e6061;border-radius:9px"></div><div class="t" style="left:1918.0px;top:1470.2px;font-size:17.5px;color:#fff;font-weight:normal;">6:00</div><svg class="a" style="left:1987.0px;top:1475.5px;" width="14" height="8" viewBox="0 0 14 8"><path d="M0,0H14L7.0,8Z" fill="#fff"/></svg>
<div class="t" style="left:1624.0px;top:1523.2px;font-size:17.5px;color:#f2f2f2;font-weight:normal;">Label Style:</div>
<div class="a" style="left:1803px;top:1511px;width:208px;height:38px;background:#5e6061;border-radius:9px"></div><div class="t" style="left:1820.0px;top:1521.7px;font-size:17.5px;color:#fff;font-weight:normal;">City</div><svg class="a" style="left:1982.0px;top:1527.0px;" width="14" height="8" viewBox="0 0 14 8"><path d="M0,0H14L7.0,8Z" fill="#fff"/></svg>
<div class="a" style="left:1621px;top:1551px;width:397px;height:338px;background:#868788"></div>
<div class="t" style="left:1641.0px;top:1565.6px;font-size:20.6px;color:#fafafa;font-weight:bold;">If Style is &quot;No Preset Style&quot;:</div>
<div class="t" style="left:1641.0px;top:1603.2px;font-size:17.5px;color:#f8f8f8;font-weight:normal;">Label Font:</div>
<div class="a" style="left:1640px;top:1633px;width:222px;height:38px;background:#737577;border-radius:9px"></div><div class="t" style="left:1656.0px;top:1643.7px;font-size:17.5px;color:#fff;font-weight:normal;">Adobe Devanagari</div><svg class="a" style="left:1833.0px;top:1649.0px;" width="14" height="8" viewBox="0 0 14 8"><path d="M0,0H14L7.0,8Z" fill="#fff"/></svg>
<div class="t" style="left:1641.0px;top:1689.2px;font-size:17.5px;color:#f8f8f8;font-weight:normal;">Label Color:</div>
<div class="a" style="left:1781px;top:1683px;width:146px;height:27px;background:#757779;border-radius:9px"></div><div class="a" style="left:1788px;top:1686.5px;width:20px;height:20px;background:#000;border:2px solid #111"></div><div class="t" style="left:1815.0px;top:1688.2px;font-size:17.5px;color:#fff;font-weight:normal;">Black</div><svg class="a" style="left:1898.0px;top:1693.5px;" width="14" height="8" viewBox="0 0 14 8"><path d="M0,0H14L7.0,8Z" fill="#fff"/></svg>
<div class="t" style="left:1641.0px;top:1727.2px;font-size:17.5px;color:#f8f8f8;font-weight:normal;">Outline Size:</div>
<div class="a" style="left:1779px;top:1720px;width:214px;height:29px;background:#2f3234;border-radius:6px;border:1px solid #2a2c2e"></div><div class="a" style="left:1780px;top:1721px;width:178px;height:27px;background:linear-gradient(#777a7d,#66696c);border-radius:6px 0 0 6px"></div><div class="t" style="left:1786.0px;top:1726.2px;font-size:17.5px;color:#111;font-weight:normal;">2</div><div class="a" style="left:1958px;top:1734.0px;width:33px;height:1px;background:#555"></div><svg class="a" style="left:1967.5px;top:1723.5px;" width="14" height="8" viewBox="0 0 14 8"><path d="M0,8H14L7,0Z" fill="#fff"/></svg><svg class="a" style="left:1967.5px;top:1737.5px;" width="14" height="8" viewBox="0 0 14 8"><path d="M0,0H14L7,8Z" fill="#fff"/></svg>
<div class="t" style="left:1641.0px;top:1765.2px;font-size:17.5px;color:#f8f8f8;font-weight:normal;">Outline Color:</div>
<div class="a" style="left:1781px;top:1759px;width:146px;height:27px;background:#757779;border-radius:9px"></div><div class="a" style="left:1788px;top:1762.5px;width:20px;height:20px;background:#000;border:2px solid #111"></div><div class="t" style="left:1815.0px;top:1764.2px;font-size:17.5px;color:#fff;font-weight:normal;">Black</div><svg class="a" style="left:1898.0px;top:1769.5px;" width="14" height="8" viewBox="0 0 14 8"><path d="M0,0H14L7.0,8Z" fill="#fff"/></svg>
<div class="t" style="left:1641.0px;top:1803.2px;font-size:17.5px;color:#f8f8f8;font-weight:normal;">Size (tile ht%):</div>
<div class="a" style="left:1779px;top:1796px;width:120px;height:29px;background:#2f3234;border-radius:6px;border:1px solid #2a2c2e"></div><div class="a" style="left:1780px;top:1797px;width:84px;height:27px;background:linear-gradient(#777a7d,#66696c);border-radius:6px 0 0 6px"></div><div class="t" style="left:1786.0px;top:1802.2px;font-size:17.5px;color:#111;font-weight:normal;">25</div><div class="a" style="left:1864px;top:1810.0px;width:33px;height:1px;background:#555"></div><svg class="a" style="left:1873.5px;top:1799.5px;" width="14" height="8" viewBox="0 0 14 8"><path d="M0,8H14L7,0Z" fill="#fff"/></svg><svg class="a" style="left:1873.5px;top:1813.5px;" width="14" height="8" viewBox="0 0 14 8"><path d="M0,0H14L7,8Z" fill="#fff"/></svg>
<div class="a" style="left:1640px;top:1838px;width:26px;height:18px;background:#7a7b7d;border-radius:9px"></div>
<div class="t" style="left:1676.0px;top:1839.2px;font-size:17.5px;color:#fafafa;font-weight:bold;">Bold</div>
<div class="a" style="left:1781px;top:1838px;width:26px;height:18px;background:#7a7b7d;border-radius:9px"></div>
<div class="t" style="left:1816.0px;top:1839.2px;font-size:17.5px;color:#fafafa;font-weight:normal;font-style:italic">Italic</div>
<div class="a" style="left:1640px;top:1870px;width:26px;height:18px;background:#7a7b7d;border-radius:9px"></div>
<div class="t" style="left:1676.0px;top:1875.2px;font-size:17.5px;color:#fafafa;font-weight:normal;">Background</div>
<div class="a" style="left:1781px;top:1869px;width:146px;height:27px;background:#757779;border-radius:9px"></div><div class="a" style="left:1788px;top:1872.5px;width:20px;height:20px;background:#000;border:2px solid #111"></div><div class="t" style="left:1815.0px;top:1874.2px;font-size:17.5px;color:#fff;font-weight:normal;">Black</div><svg class="a" style="left:1898.0px;top:1879.5px;" width="14" height="8" viewBox="0 0 14 8"><path d="M0,0H14L7.0,8Z" fill="#fff"/></svg>
<div class="a" style="left:0px;top:1889px;width:2076px;height:2px;background:#1b1d1e"></div>
<div class="a" style="left:0px;top:1891px;width:2076px;height:27px;background:#505357"></div>
<div class="t" style="left:5.0px;top:1896.2px;font-size:17.5px;color:#f8f8f8;font-weight:bold;">Notes:</div>
<div class="a" style="left:71px;top:1893px;width:129px;height:27px;background:#c9c922;border-radius:12px"></div>
<div class="t" style="left:77.0px;top:1897.2px;font-size:17.5px;color:#f8f8f8;font-weight:normal;">Add/Edit/View</div>
<div class="a" style="left:210px;top:1894px;width:26px;height:18px;background:#5c5e60;border-radius:9px"></div>
<div class="t" style="left:245.0px;top:1896.2px;font-size:17.5px;color:#f2f2f2;font-weight:normal;">Show</div>
<div class="t" style="left:303.0px;top:1896.2px;font-size:17.5px;color:#f2f2f2;font-weight:normal;">Filter:</div>
<div class="a" style="left:363px;top:1893px;width:87px;height:27px;background:#5c5e60;border-radius:12px"></div>
<div class="t" style="left:460.0px;top:1896.2px;font-size:17.5px;color:#f8f8f8;font-weight:bold;">GM Only:</div>
<div class="a" style="left:555px;top:1894px;width:26px;height:18px;background:#5c5e60;border-radius:9px"></div>
<div class="t" style="left:590.0px;top:1896.2px;font-size:17.5px;color:#f2f2f2;font-weight:normal;">Show</div>
<div class="a" style="left:646px;top:1894px;width:26px;height:18px;background:#5c5e60;border-radius:9px"></div>
<div class="t" style="left:683.0px;top:1896.2px;font-size:17.5px;color:#f2f2f2;font-weight:normal;">Glow</div>
<div class="t" style="left:738.0px;top:1896.5px;font-size:17.1px;color:#f8f8f8;font-weight:bold;">Feature Labels:</div>
<div class="a" style="left:880px;top:1894px;width:26px;height:18px;background:#5c5e60;border-radius:9px"></div><svg class="a" style="left:883px;top:1892px;" width="22" height="22" viewBox="0 0 22 22"><path d="M3,11 L9,18 L19,3" fill="none" stroke="#fff" stroke-width="2.6" stroke-linecap="round" stroke-linejoin="round"/></svg>
<div class="t" style="left:917.0px;top:1896.2px;font-size:17.5px;color:#f8f8f8;font-weight:bold;">Tags:</div>
<div class="t" style="left:979.0px;top:1896.2px;font-size:17.5px;color:#f2f2f2;font-weight:normal;">Hide Objs w/:</div>
<div class="a" style="left:1097px;top:1893px;width:88px;height:27px;background:#5c5e60;border-radius:12px"></div>
<div class="t" style="left:1195.0px;top:1896.2px;font-size:17.5px;color:#f2f2f2;font-weight:normal;">Show Only Objs w/:</div>
<div class="a" style="left:1361px;top:1893px;width:80px;height:27px;background:#5c5e60;border-radius:12px"></div>
<div class="t" style="left:1458.0px;top:1896.2px;font-size:17.5px;color:#f8f8f8;font-weight:bold;">Grid:</div>
<div class="a" style="left:1515px;top:1894px;width:26px;height:18px;background:#5c5e60;border-radius:9px"></div><svg class="a" style="left:1518px;top:1892px;" width="22" height="22" viewBox="0 0 22 22"><path d="M3,11 L9,18 L19,3" fill="none" stroke="#fff" stroke-width="2.6" stroke-linecap="round" stroke-linejoin="round"/></svg>
<div class="t" style="left:1551.0px;top:1896.2px;font-size:17.5px;color:#f2f2f2;font-weight:normal;">Show</div>
<svg class="a" style="left:1607px;top:1889px;" width="30" height="29" viewBox="0 0 30 29"><circle cx="15" cy="15" r="14" fill="#5c5e60"/><polygon points="24.32,13.15 24.50,15.00 21.87,16.37 21.47,17.68 22.90,20.28 21.72,21.72 18.89,20.82 17.68,21.47 16.85,24.32 15.00,24.50 13.63,21.87 12.32,21.47 9.72,22.90 8.28,21.72 9.18,18.89 8.53,17.68 5.68,16.85 5.50,15.00 8.13,13.63 8.53,12.32 7.10,9.72 8.28,8.28 11.11,9.18 12.32,8.53 13.15,5.68 15.00,5.50 16.37,8.13 17.68,8.53 20.28,7.10 21.72,8.28 20.82,11.11 21.47,12.32" fill="#85878a"/><circle cx="15" cy="15" r="4.3" fill="#5c5e60"/></svg>
<div class="a" style="left:1650px;top:1894px;width:26px;height:18px;background:#5c5e60;border-radius:9px"></div><svg class="a" style="left:1653px;top:1892px;" width="22" height="22" viewBox="0 0 22 22"><path d="M3,11 L9,18 L19,3" fill="none" stroke="#fff" stroke-width="2.6" stroke-linecap="round" stroke-linejoin="round"/></svg>
<div class="t" style="left:1685.0px;top:1896.2px;font-size:17.5px;color:#f2f2f2;font-weight:normal;">#s</div>
<svg class="a" style="left:1717px;top:1889px;" width="30" height="29" viewBox="0 0 30 29"><circle cx="15" cy="15" r="14" fill="#5c5e60"/><polygon points="24.32,13.15 24.50,15.00 21.87,16.37 21.47,17.68 22.90,20.28 21.72,21.72 18.89,20.82 17.68,21.47 16.85,24.32 15.00,24.50 13.63,21.87 12.32,21.47 9.72,22.90 8.28,21.72 9.18,18.89 8.53,17.68 5.68,16.85 5.50,15.00 8.13,13.63 8.53,12.32 7.10,9.72 8.28,8.28 11.11,9.18 12.32,8.53 13.15,5.68 15.00,5.50 16.37,8.13 17.68,8.53 20.28,7.10 21.72,8.28 20.82,11.11 21.47,12.32" fill="#85878a"/><circle cx="15" cy="15" r="4.3" fill="#5c5e60"/></svg>
<div class="a" style="left:1760px;top:1894px;width:26px;height:18px;background:#5c5e60;border-radius:9px"></div><svg class="a" style="left:1763px;top:1892px;" width="22" height="22" viewBox="0 0 22 22"><path d="M3,11 L9,18 L19,3" fill="none" stroke="#fff" stroke-width="2.6" stroke-linecap="round" stroke-linejoin="round"/></svg>
<div class="t" style="left:1795.0px;top:1896.2px;font-size:17.5px;color:#f2f2f2;font-weight:normal;">Shadows</div>
<div class="a" style="left:316px;top:128px;width:1218px;height:1034px;background:#3a3c3e;border-radius:9px;box-shadow:0 2px 14px 3px rgba(0,0,0,0.28)"></div>
<div class="a" style="left:317px;top:129px;width:1216px;height:1031px;background:#f4f4f4;border-radius:8px;overflow:hidden"></div>
<div class="a" style="left:317px;top:129px;width:1216px;height:43px;background:#fff;border-radius:8px 8px 0 0"></div>
<svg class="a" style="left:330px;top:138px;" width="23" height="21" viewBox="0 0 23 21"><rect x="0.5" y="0.5" width="22" height="20" fill="#ddd" stroke="#888"/><rect x="3" y="3" width="12" height="15" fill="#3a9a70"/><rect x="17" y="4" width="3" height="6" fill="#3a7ac0"/></svg>
<div class="t" style="left:357.0px;top:142.7px;font-size:17.5px;color:#111;font-weight:normal;">Note: Bielegen B475433-8</div>
<div class="a" style="left:1351px;top:149px;width:15px;height:1.2px;background:#c4c4c4"></div>
<div class="a" style="left:1420px;top:143px;width:15px;height:15px;border:1.5px solid #111;border-radius:2px"></div>
<svg class="a" style="left:1490px;top:142px;" width="16" height="16" viewBox="0 0 16 16"><path d="M1,1L15,15M15,1L1,15" stroke="#111" stroke-width="1.5"/></svg>
<div class="a" style="left:317px;top:172px;width:1216px;height:59px;background:linear-gradient(#f3f3f3,#f8f8f8)"></div>
<div class="a" style="left:317px;top:231px;width:1216px;height:1.5px;background:#c6c6c6"></div>
<div class="t" style="left:332.0px;top:192.5px;font-size:21.3px;color:#333;font-weight:normal;">Note</div>
<div class="t" style="left:325.0px;top:245.2px;font-size:17.5px;color:#333;font-weight:normal;">Title:</div>
<div class="a" style="left:325px;top:281px;width:1200px;height:37px;background:#fff;border:1px solid #c3c3c3;border-radius:3px;box-shadow:inset 0 1px 1px #e6e6e6"></div>
<div class="t" style="left:338.0px;top:292.8px;font-size:17.4px;color:#333;font-weight:normal;">Bielegen B475433-8</div>
<div class="t" style="left:325.0px;top:339.2px;font-size:17.5px;color:#333;font-weight:normal;">Color:</div>
<div class="a" style="left:325px;top:376px;width:186px;height:36px;background:linear-gradient(#fbfbfb,#e2e2e2);border:1px solid #b7b7b7;border-radius:4px"></div>
<div class="a" style="left:338px;top:384px;width:18px;height:18px;background:#ffff00;border:1px solid #c9c9c9"></div>
<div class="t" style="left:363.0px;top:386.2px;font-size:17.5px;color:#333;font-weight:normal;">Yellow</div>
<svg class="a" style="left:487.0px;top:390.5px;" width="12" height="7" viewBox="0 0 12 7"><path d="M0,0H12L6.0,7Z" fill="#333"/></svg>
<div class="t" style="left:325.0px;top:433.2px;font-size:17.5px;color:#333;font-weight:normal;">File:</div>
<div class="a" style="left:333px;top:469px;width:116px;height:37px;background:linear-gradient(#fbfbfb,#e3e3e3);border:1px solid #b5b5b5;border-radius:4px"></div><div class="t" style="left:391.0px;top:479.0px;width:0;font-size:17.5px;color:#333;font-weight:normal;display:flex;justify-content:center;">Change File</div>
<div class="a" style="left:458px;top:469px;width:100px;height:37px;background:linear-gradient(#fbfbfb,#e3e3e3);border:1px solid #b5b5b5;border-radius:4px"></div><div class="t" style="left:508.0px;top:479.0px;width:0;font-size:17.5px;color:#333;font-weight:normal;display:flex;justify-content:center;">Open File</div>
<div class="a" style="left:325px;top:522px;width:1200px;height:43px;background:#dcdcdc"></div>
<div class="a" style="left:333px;top:531px;width:93px;height:35px;background:linear-gradient(#f6f6f6,#ececec);border:1px solid #bbb;border-bottom:none;border-radius:5px 5px 0 0"></div>
<div class="t" style="left:342.0px;top:542.3px;font-size:17.4px;color:#333;font-weight:normal;">Details</div>
<svg class="a" style="left:401px;top:543px;" width="13" height="13" viewBox="0 0 13 13"><path d="M1,1L12,12M12,1L1,12" stroke="#333" stroke-width="2"/></svg>
<div class="a" style="left:325px;top:565px;width:1200px;height:52px;background:linear-gradient(#f6f6f6,#ebebeb);border-bottom:1px solid #c8c8c8"></div>
<div class="a" style="left:325px;top:617px;width:1200px;height:55px;background:linear-gradient(#f6f6f6,#ebebeb);border-bottom:1.5px solid #c4c4c4"></div>
<div class="a" style="left:334px;top:574px;width:39px;height:35px;background:linear-gradient(#fafafa,#e2e2e2);border:1px solid #bdbdbd;border-radius:4px;opacity:0.45;"></div><svg class="a" style="left:334px;top:574px;opacity:0.45;" width="39" height="35" viewBox="0 0 39 35"><g fill="none" stroke="#666" stroke-width="2"><circle cx="13" cy="21" r="3.5"/><circle cx="20" cy="13" r="3.5"/><path d="M16,21L28,27M20,17L26,29"/></g></svg>
<div class="a" style="left:380px;top:574px;width:39px;height:35px;background:linear-gradient(#fafafa,#e2e2e2);border:1px solid #bdbdbd;border-radius:4px;opacity:0.45;"></div><svg class="a" style="left:380px;top:574px;opacity:0.45;" width="39" height="35" viewBox="0 0 39 35"><g fill="#777"><path d="M9,9H15L17,11V20H9Z"/><path d="M19,16H25L27,18V27H19Z"/></g></svg>
<div class="a" style="left:426px;top:574px;width:39px;height:35px;background:linear-gradient(#fafafa,#e2e2e2);border:1px solid #bdbdbd;border-radius:4px;opacity:0.45;"></div><svg class="a" style="left:426px;top:574px;opacity:0.45;" width="39" height="35" viewBox="0 0 39 35"><g fill="#777"><rect x="11" y="10" width="14" height="18" rx="2"/><rect x="15" y="7" width="6" height="4"/></g><g fill="#fff"><rect x="16" y="16" width="10" height="12"/></g><g stroke="#777" stroke-width="1.5"><path d="M18,19H24M18,22H24M18,25H24"/></g></svg>
<div class="a" style="left:474px;top:576px;width:1px;height:32px;background:#c8c8c8"></div>
<div class="a" style="left:673px;top:576px;width:1px;height:32px;background:#c8c8c8"></div>
<div class="a" style="left:780px;top:576px;width:1px;height:32px;background:#c8c8c8"></div>
<div class="a" style="left:887px;top:576px;width:1px;height:32px;background:#c8c8c8"></div>
<div class="a" style="left:487px;top:574px;width:39px;height:35px;background:linear-gradient(#fafafa,#e2e2e2);border:1px solid #bdbdbd;border-radius:4px;"></div><svg class="a" style="left:487px;top:574px;" width="39" height="35" viewBox="0 0 39 35"><g stroke="#555" stroke-width="2.4"><path d="M9,11H30"/><path d="M9,16H23"/><path d="M9,21H30"/><path d="M9,26H23"/></g></svg>
<div class="a" style="left:533px;top:574px;width:39px;height:35px;background:linear-gradient(#fafafa,#e2e2e2);border:1px solid #bdbdbd;border-radius:4px;"></div><svg class="a" style="left:533px;top:574px;" width="39" height="35" viewBox="0 0 39 35"><g stroke="#555" stroke-width="2.4"><path d="M9,11H30"/><path d="M12,16H27"/><path d="M9,21H30"/><path d="M12,26H27"/></g></svg>
<div class="a" style="left:579px;top:574px;width:39px;height:35px;background:linear-gradient(#fafafa,#e2e2e2);border:1px solid #bdbdbd;border-radius:4px;"></div><svg class="a" style="left:579px;top:574px;" width="39" height="35" viewBox="0 0 39 35"><g stroke="#555" stroke-width="2.4"><path d="M9,11H30"/><path d="M16,16H30"/><path d="M9,21H30"/><path d="M16,26H30"/></g></svg>
<div class="a" style="left:625px;top:574px;width:39px;height:35px;background:linear-gradient(#fafafa,#e2e2e2);border:1px solid #bdbdbd;border-radius:4px;"></div><svg class="a" style="left:625px;top:574px;" width="39" height="35" viewBox="0 0 39 35"><g stroke="#555" stroke-width="2.4"><path d="M9,11H30"/><path d="M9,16H30"/><path d="M9,21H30"/><path d="M9,26H30"/></g></svg>
<div class="a" style="left:686px;top:574px;width:39px;height:35px;background:linear-gradient(#fafafa,#e2e2e2);border:1px solid #bdbdbd;border-radius:4px;"></div><svg class="a" style="left:686px;top:574px;" width="39" height="35" viewBox="0 0 39 35"><g stroke="#555" stroke-width="2.4"><path d="M15,11H31"/><path d="M20,16H31"/><path d="M20,21H31"/><path d="M15,26H31"/></g><path d="M8,18L14,13V23Z" fill="#444"/><path d="M12,18H19" stroke="#444" stroke-width="2.4"/></svg>
<div class="a" style="left:732px;top:574px;width:39px;height:35px;background:linear-gradient(#fafafa,#e2e2e2);border:1px solid #bdbdbd;border-radius:4px;"></div><svg class="a" style="left:732px;top:574px;" width="39" height="35" viewBox="0 0 39 35"><g stroke="#555" stroke-width="2.4"><path d="M15,11H31"/><path d="M20,16H31"/><path d="M20,21H31"/><path d="M15,26H31"/></g><path d="M19,18L13,13V23Z" fill="#444"/><path d="M7,18H14" stroke="#444" stroke-width="2.4"/></svg>
<div class="a" style="left:793px;top:574px;width:39px;height:35px;background:linear-gradient(#fafafa,#e2e2e2);border:1px solid #bdbdbd;border-radius:4px;"></div><svg class="a" style="left:793px;top:574px;" width="39" height="35" viewBox="0 0 39 35"><g stroke="#555" stroke-width="2.4"><path d="M17,11H31"/><path d="M17,18H31"/><path d="M17,25H31"/></g><circle cx="11" cy="11" r="2.2" fill="#444"/><circle cx="11" cy="23" r="2.2" fill="#444"/></svg>
<div class="a" style="left:839px;top:574px;width:39px;height:35px;background:linear-gradient(#fafafa,#e2e2e2);border:1px solid #bdbdbd;border-radius:4px;"></div><svg class="a" style="left:839px;top:574px;" width="39" height="35" viewBox="0 0 39 35"><g stroke="#555" stroke-width="2.4"><path d="M17,11H31"/><path d="M17,18H31"/><path d="M17,25H31"/></g><text x="8" y="15" font-size="9" font-weight="bold" fill="#444" font-family="Liberation Sans">1</text><text x="8" y="28" font-size="9" font-weight="bold" fill="#444" font-family="Liberation Sans">2</text></svg>
<div class="a" style="left:900px;top:574px;width:71px;height:35px;background:linear-gradient(#fafafa,#e2e2e2);border:1px solid #bdbdbd;border-radius:4px"></div>
<svg class="a" style="left:900px;top:574px;" width="71" height="35" viewBox="0 0 71 35"><rect x="12" y="6" width="7" height="6" fill="#000"/><rect x="13" y="7" width="5" height="4" fill="#000"/><text x="19" y="29" font-size="22" fill="#444" font-family="Liberation Serif">A</text><path d="M44,17H56L50,23Z" fill="#333"/></svg>
<div class="a" style="left:978px;top:574px;width:72px;height:35px;background:linear-gradient(#fafafa,#e2e2e2);border:1px solid #bdbdbd;border-radius:4px"></div>
<svg class="a" style="left:978px;top:574px;" width="72" height="35" viewBox="0 0 72 35"><rect x="12" y="6" width="7" height="6" fill="#fff" stroke="#555"/><rect x="12" y="12" width="22" height="18" fill="none" stroke="#555"/><text x="15" y="28" font-size="20" fill="#555" font-family="Liberation Serif">A</text><path d="M44,17H56L50,23Z" fill="#333"/></svg>
<div class="a" style="left:334px;top:626px;width:152px;height:38px;background:linear-gradient(#fafafa,#e2e2e2);border:1px solid #bdbdbd;border-radius:4px"></div>
<div class="t" style="left:347.0px;top:637.2px;font-size:17.5px;color:#333;font-weight:normal;">Paragraph</div>
<svg class="a" style="left:463.0px;top:640.5px;" width="12" height="7" viewBox="0 0 12 7"><path d="M0,0H12L6.0,7Z" fill="#333"/></svg>
<div class="a" style="left:494px;top:626px;width:223px;height:38px;background:linear-gradient(#fafafa,#e2e2e2);border:1px solid #bdbdbd;border-radius:4px"></div>
<svg class="a" style="left:694.0px;top:640.5px;" width="12" height="7" viewBox="0 0 12 7"><path d="M0,0H12L6.0,7Z" fill="#333"/></svg>
<div class="a" style="left:725px;top:626px;width:235px;height:38px;background:linear-gradient(#fafafa,#e2e2e2);border:1px solid #bdbdbd;border-radius:4px"></div>
<div class="t" style="left:738.0px;top:637.2px;font-size:17.5px;color:#333;font-weight:normal;">12 pt</div>
<svg class="a" style="left:937.0px;top:640.5px;" width="12" height="7" viewBox="0 0 12 7"><path d="M0,0H12L6.0,7Z" fill="#333"/></svg>
<div class="a" style="left:969px;top:628px;width:1px;height:34px;background:#c8c8c8"></div>
<div class="a" style="left:1168px;top:628px;width:1px;height:34px;background:#c8c8c8"></div>
<div class="a" style="left:982px;top:627px;width:39px;height:37px;background:linear-gradient(#fafafa,#e2e2e2);border:1px solid #bdbdbd;border-radius:4px;"></div><svg class="a" style="left:982px;top:627px;" width="39" height="37" viewBox="0 0 39 37"><text x="19.5" y="28" font-size="25" font-weight="bold" fill="#555" text-anchor="middle" font-family="Liberation Serif">B</text></svg>
<div class="a" style="left:1029px;top:627px;width:38px;height:37px;background:linear-gradient(#fafafa,#e2e2e2);border:1px solid #bdbdbd;border-radius:4px;"></div><svg class="a" style="left:1029px;top:627px;" width="38" height="37" viewBox="0 0 38 37"><text x="19" y="28" font-size="25" font-style="italic" fill="#555" text-anchor="middle" font-family="Liberation Serif">I</text></svg>
<div class="a" style="left:1074px;top:627px;width:39px;height:37px;background:linear-gradient(#fafafa,#e2e2e2);border:1px solid #bdbdbd;border-radius:4px;"></div><svg class="a" style="left:1074px;top:627px;" width="39" height="37" viewBox="0 0 39 37"><text x="19.5" y="26" font-size="24" fill="#555" text-anchor="middle" font-family="Liberation Serif">U</text><path d="M11,30H28" stroke="#555" stroke-width="1.6"/></svg>
<div class="a" style="left:1120px;top:627px;width:39px;height:37px;background:linear-gradient(#fafafa,#e2e2e2);border:1px solid #bdbdbd;border-radius:4px;"></div><svg class="a" style="left:1120px;top:627px;" width="39" height="37" viewBox="0 0 39 37"><text x="19.5" y="28" font-size="24" fill="#555" text-anchor="middle" font-family="Liberation Serif">T</text><path d="M8,18H31" stroke="#555" stroke-width="1.8"/></svg>
<div class="a" style="left:1181px;top:627px;width:39px;height:37px;background:linear-gradient(#fafafa,#e2e2e2);border:1px solid #bdbdbd;border-radius:4px;"></div><svg class="a" style="left:1181px;top:627px;" width="39" height="37" viewBox="0 0 39 37"><g stroke="#555" stroke-width="2"><path d="M15,8H24M12,14H27M15,25H24M15,30H24"/></g><path d="M8,19H31" stroke="#555" stroke-width="3"/></svg>
<div class="a" style="left:325px;top:672px;width:1200px;height:344px;background:#fff"></div>
<div class="a" style="left:337.5px;top:693.5px;width:7px;height:7px;background:#000;border-radius:50%"></div>
<div class="t" style="left:358px;top:683.6px;font-size:24px;color:#000;font-family:'Liberation Serif',serif">Population: 10,000+</div>
<div class="a" style="left:337.5px;top:720.55px;width:7px;height:7px;background:#000;border-radius:50%"></div>
<div class="t" style="left:358px;top:710.7px;font-size:24px;color:#000;font-family:'Liberation Serif',serif">Size: 6400km</div>
<div class="a" style="left:337.5px;top:747.6px;width:7px;height:7px;background:#000;border-radius:50%"></div>
<div class="t" style="left:358px;top:737.7px;font-size:24px;color:#000;font-family:'Liberation Serif',serif">Atmosphere: Standard, Tainted (0.71-1.49; Filter Required)</div>
<div class="a" style="left:337.5px;top:774.65px;width:7px;height:7px;background:#000;border-radius:50%"></div>
<div class="t" style="left:358px;top:764.8px;font-size:24px;color:#000;font-family:'Liberation Serif',serif">Temperature: Frozen (-51C or less)</div>
<div class="a" style="left:337.5px;top:801.7px;width:7px;height:7px;background:#000;border-radius:50%"></div>
<div class="t" style="left:358px;top:791.8px;font-size:24px;color:#000;font-family:'Liberation Serif',serif">Hydrographics: 46-55% (A large ocean)</div>
<div class="a" style="left:337.5px;top:828.75px;width:7px;height:7px;background:#000;border-radius:50%"></div>
<div class="t" style="left:358px;top:818.9px;font-size:24px;color:#000;font-family:'Liberation Serif',serif">Government: Self-perpetuating Oligarchy</div>
<div class="a" style="left:337.5px;top:855.8px;width:7px;height:7px;background:#000;border-radius:50%"></div>
<div class="t" style="left:358px;top:845.9px;font-size:24px;color:#000;font-family:'Liberation Serif',serif">Law Level: 3 Weapon Restrictions: Heavy weapons</div>
<div class="a" style="left:337.5px;top:882.85px;width:7px;height:7px;background:#000;border-radius:50%"></div>
<div class="t" style="left:358px;top:873.0px;font-size:24px;color:#000;font-family:'Liberation Serif',serif">Tech Level: 8</div>
<div class="a" style="left:337.5px;top:909.9px;width:7px;height:7px;background:#000;border-radius:50%"></div>
<div class="t" style="left:358px;top:900.0px;font-size:24px;color:#000;font-family:'Liberation Serif',serif">Bases:</div>
<div class="a" style="left:337.5px;top:936.95px;width:7px;height:7px;background:#000;border-radius:50%"></div>
<div class="t" style="left:358px;top:927.1px;font-size:24px;color:#000;font-family:'Liberation Serif',serif">Facilities: Shipyard (spacecraft), Repair, Highport</div>
<div class="a" style="left:337.5px;top:964.0px;width:7px;height:7px;background:#000;border-radius:50%"></div>
<div class="t" style="left:358px;top:954.1px;font-size:24px;color:#000;font-family:'Liberation Serif',serif">Trade Codes: Non-Industrial</div>
<div class="a" style="left:325px;top:1047px;width:174px;height:37px;background:linear-gradient(#fbfbfb,#e3e3e3);border:1px solid #b5b5b5;border-radius:4px"></div><div class="t" style="left:338.0px;top:1057.0px;font-size:17.5px;color:#333;font-weight:normal;">Regenerate Details</div>
<div class="a" style="left:1277px;top:1109px;width:112px;height:37px;background:linear-gradient(#fbfbfb,#e3e3e3);border:2px solid #0a94d0;border-radius:4px"></div><div class="t" style="left:1333.0px;top:1119.0px;width:0;font-size:17.5px;color:#333;font-weight:normal;display:flex;justify-content:center;">Close</div>
<div class="a" style="left:1405px;top:1109px;width:112px;height:37px;background:linear-gradient(#fbfbfb,#e3e3e3);border:1px solid #b5b5b5;border-radius:4px"></div><div class="t" style="left:1461.0px;top:1119.0px;width:0;font-size:17.5px;color:#333;font-weight:normal;display:flex;justify-content:center;">Save</div>
</body></html>
